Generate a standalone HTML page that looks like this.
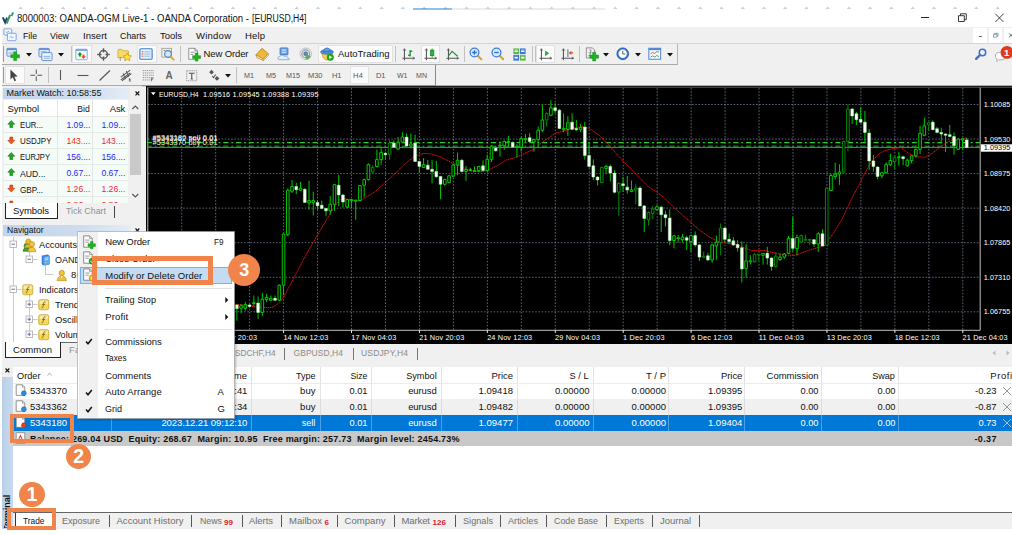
<!DOCTYPE html>
<html lang="en"><head><meta charset="utf-8"><title>MetaTrader 4 - Modify or Delete Order</title>
<style>
html,body{margin:0;padding:0;background:#fff;}
body{width:1012px;height:534px;position:relative;overflow:hidden;font-family:"Liberation Sans",sans-serif;}
.t{position:absolute;white-space:pre;}
.r{position:absolute;}
.i{position:absolute;overflow:visible;}
svg text{font-family:"Liberation Sans",sans-serif;}
</style></head>
<body>
<div class="r" style="left:2px;top:27px;width:1010px;height:60px;background:#f0f0f0;"></div>
<div class="r" style="left:2px;top:87px;width:144px;height:276px;background:#f0f0f0;"></div>
<svg class="i" style="left:0;top:0" width="1012" height="12"><path d="M18.4 8.900l2.200-2.400 2.200 2.400z" fill="#c6d0e0"/><path d="M39.6 8.900l2.200-2.400 2.200 2.400z" fill="#c6d0e0"/><path d="M60.9 8.900l2.200-2.400 2.200 2.400z" fill="#c6d0e0"/><path d="M82.1 8.900l2.200-2.400 2.200 2.400z" fill="#c6d0e0"/><path d="M103.4 8.900l2.200-2.400 2.200 2.400z" fill="#c6d0e0"/><path d="M124.6 8.900l2.200-2.400 2.200 2.400z" fill="#c6d0e0"/><path d="M145.8 8.900l2.200-2.400 2.200 2.400z" fill="#c6d0e0"/><path d="M167.1 8.900l2.200-2.400 2.200 2.400z" fill="#c6d0e0"/><path d="M188.3 8.900l2.200-2.400 2.200 2.400z" fill="#c6d0e0"/><path d="M209.6 8.900l2.200-2.400 2.200 2.400z" fill="#c6d0e0"/><path d="M230.8 8.900l2.200-2.400 2.200 2.400z" fill="#c6d0e0"/><path d="M252.0 8.900l2.200-2.400 2.200 2.400z" fill="#c6d0e0"/><path d="M273.3 8.900l2.200-2.400 2.200 2.400z" fill="#c6d0e0"/><path d="M294.5 8.900l2.200-2.400 2.200 2.400z" fill="#c6d0e0"/><path d="M315.8 8.900l2.200-2.400 2.200 2.400z" fill="#c6d0e0"/><path d="M337.0 8.900l2.200-2.400 2.200 2.400z" fill="#c6d0e0"/><path d="M358.2 8.900l2.200-2.400 2.200 2.400z" fill="#c6d0e0"/><path d="M379.5 8.900l2.200-2.400 2.200 2.400z" fill="#c6d0e0"/><path d="M400.7 8.900l2.200-2.400 2.200 2.400z" fill="#c6d0e0"/><path d="M422.0 8.900l2.200-2.400 2.200 2.400z" fill="#c6d0e0"/><path d="M443.2 8.900l2.200-2.400 2.200 2.400z" fill="#c6d0e0"/><path d="M464.4 8.900l2.200-2.400 2.200 2.400z" fill="#c6d0e0"/><path d="M485.7 8.900l2.200-2.400 2.200 2.400z" fill="#c6d0e0"/><path d="M506.9 8.900l2.200-2.400 2.200 2.400z" fill="#c6d0e0"/><path d="M528.2 8.900l2.200-2.400 2.200 2.400z" fill="#c6d0e0"/><path d="M549.4 8.900l2.200-2.400 2.200 2.400z" fill="#c6d0e0"/><path d="M570.6 8.900l2.200-2.400 2.200 2.400z" fill="#c6d0e0"/><path d="M591.9 8.900l2.200-2.400 2.200 2.400z" fill="#c6d0e0"/><path d="M613.1 8.900l2.200-2.400 2.200 2.400z" fill="#c6d0e0"/><path d="M634.4 8.900l2.200-2.400 2.200 2.400z" fill="#c6d0e0"/><path d="M655.6 8.900l2.200-2.400 2.200 2.400z" fill="#c6d0e0"/><path d="M676.8 8.900l2.200-2.400 2.200 2.400z" fill="#c6d0e0"/><path d="M698.1 8.900l2.200-2.400 2.200 2.400z" fill="#c6d0e0"/><path d="M719.3 8.900l2.200-2.400 2.200 2.400z" fill="#c6d0e0"/><path d="M740.6 8.900l2.200-2.400 2.200 2.400z" fill="#c6d0e0"/><path d="M761.8 8.900l2.200-2.400 2.200 2.400z" fill="#c6d0e0"/><path d="M783.0 8.900l2.200-2.400 2.200 2.400z" fill="#c6d0e0"/><path d="M804.3 8.900l2.200-2.400 2.200 2.400z" fill="#c6d0e0"/><path d="M825.5 8.900l2.200-2.400 2.200 2.400z" fill="#c6d0e0"/><path d="M846.8 8.900l2.200-2.400 2.200 2.400z" fill="#c6d0e0"/><path d="M868.0 8.900l2.200-2.400 2.200 2.400z" fill="#c6d0e0"/><path d="M889.2 8.900l2.200-2.400 2.200 2.400z" fill="#c6d0e0"/><path d="M910.5 8.900l2.200-2.400 2.200 2.400z" fill="#c6d0e0"/><path d="M931.7 8.900l2.200-2.400 2.200 2.400z" fill="#c6d0e0"/><path d="M953.0 8.900l2.200-2.400 2.200 2.400z" fill="#c6d0e0"/><path d="M974.2 8.900l2.200-2.400 2.200 2.400z" fill="#c6d0e0"/><path d="M995.4 8.900l2.200-2.400 2.200 2.400z" fill="#c6d0e0"/><path d="M1016.7 8.900l2.200-2.400 2.200 2.400z" fill="#c6d0e0"/><path d="M413 9h39" stroke="#2a80dc" stroke-width="1.100"/><path d="M452 9h153.500" stroke="#d6d6d6" stroke-width=".9"/></svg>
<svg class="i" style="left:2.3px;top:12.3px" width="12" height="12" viewBox="0 0 12 12"><path d="M0.800 5.300l2.300 5.200 1.900-4.800" stroke="#1f3a6e" stroke-width="1.900" fill="none"/><path d="M4.600 11.500l3.600-8.600" stroke="#2e9f62" stroke-width="2"/><path d="M9.600 4l1.500-3.600" stroke="#2e9f62" stroke-width="1.900"/></svg>
<span class="t" style="font-size:10px;line-height:12px;top:12.50px;color:#111;left:17.00px;transform:scaleX(0.9575);transform-origin:0 50%;">8000003: OANDA-OGM Live-1 - OANDA Corporation -</span>
<span class="t" style="font-size:10px;line-height:12px;top:12.50px;color:#111;left:252.00px;transform:scaleX(0.8604);transform-origin:0 50%;">[EURUSD,H4]</span>
<svg class="i" style="left:915px;top:8px" width="97" height="18"><path d="M6 9.500h8" stroke="#222" stroke-width="1"/><path d="M43.500 7.700h5.800v5.800h-5.800zM45.500 7.700v-1.900h5.800v5.800h-2" stroke="#222" stroke-width=".9" fill="none"/><path d="M80.300 5.800l8.200 8.200M88.500 5.800l-8.200 8.200" stroke="#222" stroke-width=".85"/></svg>
<svg class="i" style="left:3px;top:28px" width="14" height="14" viewBox="0 0 16 16"><rect x="1" y="1" width="9" height="7" rx="1" fill="#f5f9ff" stroke="#5b8fe0" stroke-width=".9"/><rect x="5" y="6" width="10" height="8.500" rx="1" fill="#f5f9ff" stroke="#5b8fe0" stroke-width=".9"/><path d="M3 4l1.500 1.500 1.500-2 1.500 1.500M7.500 11l1.500-1.500 1.500 2 1.500-1.500" stroke="#5b8fe0" stroke-width=".8" fill="none"/></svg>
<span class="t" style="font-size:9.5px;line-height:11.5px;top:29.75px;color:#111;left:22.50px;transform:scaleX(0.9146);transform-origin:0 50%;">File</span>
<span class="t" style="font-size:9.5px;line-height:11.5px;top:29.75px;color:#111;left:50.00px;transform:scaleX(0.9305);transform-origin:0 50%;">View</span>
<span class="t" style="font-size:9.5px;line-height:11.5px;top:29.75px;color:#111;letter-spacing:0.049px;left:83.00px;">Insert</span>
<span class="t" style="font-size:9.5px;line-height:11.5px;top:29.75px;color:#111;left:120.00px;transform:scaleX(0.9293);transform-origin:0 50%;">Charts</span>
<span class="t" style="font-size:9.5px;line-height:11.5px;top:29.75px;color:#111;letter-spacing:-0.044px;left:160.00px;">Tools</span>
<span class="t" style="font-size:9.5px;line-height:11.5px;top:29.75px;color:#111;letter-spacing:0.243px;left:196.00px;">Window</span>
<span class="t" style="font-size:9.5px;line-height:11.5px;top:29.75px;color:#111;letter-spacing:0.154px;left:245.00px;">Help</span>
<div class="r" style="left:973px;top:28px;width:14px;height:15px;background:#fff;"></div>
<div class="r" style="left:989px;top:28px;width:13px;height:15px;background:#fff;"></div>
<div class="r" style="left:1004px;top:28px;width:8px;height:15px;background:#fff;"></div>
<svg class="i" style="left:973px;top:28px" width="39" height="15"><path d="M5.800 8.500h3" stroke="#445078" stroke-width=".9"/><path d="M20.500 6.300h3.500v2.800h-3.500zM21.500 6.300v-1h3.500v2.800h-1" stroke="#7a86a6" stroke-width=".8" fill="none"/><path d="M36 5.300l4 4M40 5.300l-4 4" stroke="#50586e" stroke-width=".9"/></svg>
<div class="r" style="left:2px;top:43px;width:1010px;height:1px;background:#d4d4d4;"></div>
<div class="r" style="left:2px;top:64px;width:675px;height:1px;background:#a9a9a9;"></div>
<div class="r" style="left:677px;top:44px;width:1px;height:21px;background:#b5b5b5;"></div>
<div class="r" style="left:3px;top:46px;width:1px;height:16px;background:#9a9a9a;"></div>
<div class="r" style="left:72px;top:45px;width:20px;height:18px;background:#fbfbfb;box-shadow:inset 0 0 0 1px #e2e2e2;"></div>
<div class="r" style="left:137px;top:45px;width:20px;height:18px;background:#fbfbfb;box-shadow:inset 0 0 0 1px #e2e2e2;"></div>
<div class="r" style="left:318px;top:45px;width:75px;height:18px;background:#fbfbfb;box-shadow:inset 0 0 0 1px #e2e2e2;"></div>
<div class="r" style="left:421px;top:45px;width:19px;height:18px;background:#fbfbfb;box-shadow:inset 0 0 0 1px #e2e2e2;"></div>
<div class="r" style="left:536px;top:45px;width:19px;height:18px;background:#fbfbfb;box-shadow:inset 0 0 0 1px #e2e2e2;"></div>
<div class="r" style="left:71px;top:46px;width:1px;height:16px;background:#c2c2c2;"></div>
<div class="r" style="left:180px;top:46px;width:1px;height:16px;background:#c2c2c2;"></div>
<div class="r" style="left:395px;top:46px;width:1px;height:16px;background:#c2c2c2;"></div>
<div class="r" style="left:464px;top:46px;width:1px;height:16px;background:#c2c2c2;"></div>
<div class="r" style="left:532px;top:46px;width:1px;height:16px;background:#c2c2c2;"></div>
<div class="r" style="left:535px;top:46px;width:1px;height:16px;background:#c2c2c2;"></div>
<div class="r" style="left:579px;top:46px;width:1px;height:16px;background:#c2c2c2;"></div>
<svg class="i" style="left:6px;top:47px" width="14" height="14" viewBox="0 0 16 16"><rect x="1" y="1.5" width="11" height="9" rx="1" fill="#dbe9fb" stroke="#5a8fd6"/><rect x="1" y="1.5" width="11" height="2" fill="#5a8fd6"/><path d="M3 7h5" stroke="#7aa0d0" stroke-width="1"/><path d="M8.75 5.5h3.5v3.25h3.25v3.5h-3.25v3.25h-3.5v-3.25h-3.25v-3.5h3.25z" fill="#1db31d" stroke="#0c8a0c" stroke-width=".5"/></svg>
<svg class="i" style="left:38px;top:46.5px" width="15" height="15" viewBox="0 0 16 16"><rect x="1" y="1.5" width="11" height="9" rx="1" fill="#dbe9fb" stroke="#5a8fd6"/><rect x="1" y="1.5" width="11" height="1.6" fill="#5a8fd6"/><rect x="4" y="6" width="11" height="8.5" rx="1" fill="#e8f1fc" stroke="#5a8fd6"/><path d="M3 5h6M6 10h7M6 12h7" stroke="#7aa0d0" stroke-width=".8"/></svg>
<svg class="i" style="left:75px;top:47.5px" width="13" height="13" viewBox="0 0 16 16"><rect x="1" y="1.5" width="14" height="13" rx="1" fill="#f4f9ff" stroke="#6aa0e0"/><rect x="1" y="1.5" width="14" height="2" fill="#6aa0e0"/><path d="M6 5l3 3.2h-1.8v2.3h-2.4v-2.3h-1.8z" fill="#1a9a1a"/><path d="M10.5 13.5l-3-3.2h1.8v-2h2.4v2h1.8z" fill="#e8501c"/></svg>
<svg class="i" style="left:96.5px;top:47.5px" width="13" height="13" viewBox="0 0 16 16"><circle cx="8" cy="8" r="4.800" fill="none" stroke="#5a5a5a" stroke-width="1.800"/><path d="M8 0.300v5.200M8 10.500v5.200M0.300 8h5.200M10.500 8h5.200" stroke="#5a5a5a" stroke-width="1.700"/></svg>
<svg class="i" style="left:116.5px;top:46.5px" width="15" height="15" viewBox="0 0 16 16"><path d="M1 3.5q0-1 1-1h3l1.2 1.5h5.3q.8 0 .8 1v6.5h-11.3z" fill="#f7dc6a" stroke="#c9a227" stroke-width=".8"/><path d="M11 6.2l1.4 2.9 3.1.4-2.3 2.1.6 3.1-2.8-1.5-2.8 1.5.6-3.1-2.3-2.1 3.1-.4z" fill="#ffe24a" stroke="#c8950c" stroke-width=".8"/><path d="M3.5 11v3.5" stroke="#555" stroke-width="1" stroke-dasharray="1.2 1"/></svg>
<svg class="i" style="left:139px;top:47px" width="14" height="14" viewBox="0 0 16 16"><rect x="1" y="2" width="14" height="12" rx="1.2" fill="#eaf2fd" stroke="#3b7fd9" stroke-width="1.3"/><path d="M3 5.5h2M3 8h2M3 10.5h2" stroke="#d04020" stroke-width="1"/><path d="M6 5.5h7M6 8h7M6 10.5h7" stroke="#8fb2e0" stroke-width="1"/></svg>
<svg class="i" style="left:161px;top:47px" width="14" height="14" viewBox="0 0 16 16"><rect x="1" y="1.5" width="11" height="10" fill="#f1efe8" stroke="#9a958a" stroke-width=".9"/><path d="M3 4h2M6.5 4h2" stroke="#777" stroke-width="1"/><circle cx="8" cy="8" r="3.8" fill="#cfe3fa" fill-opacity=".8" stroke="#4a86d0" stroke-width="1.3"/><path d="M11 11l3.5 3.5" stroke="#d9a520" stroke-width="2" stroke-linecap="round"/></svg>
<svg class="i" style="left:186.5px;top:47px" width="14" height="14" viewBox="0 0 16 16"><path d="M2 1.5h7l3 3v9.5h-10z" fill="#fff" stroke="#777" stroke-width=".9"/><path d="M9 1.5v3h3" fill="none" stroke="#777" stroke-width=".9"/><path d="M4 6h5M4 8.5h3" stroke="#888" stroke-width="1"/><path d="M9.39 6.9h3.22v2.99h2.99v3.22h-2.99v2.99h-3.22v-2.99h-2.99v-3.22h2.99z" fill="#1db31d" stroke="#0c8a0c" stroke-width=".5"/></svg>
<svg class="i" style="left:255px;top:47px" width="14" height="14" viewBox="0 0 16 16"><path d="M1 9l7-7.5 7 6-6 7z" fill="#f0b83a" stroke="#b87a14" stroke-width=".9"/><path d="M1 9l1 3 7.5 3.5-.5-2z" fill="#fff3c8" stroke="#b87a14" stroke-width=".8"/><path d="M15 7.500l.2 2.2-5.700 5.800" fill="none" stroke="#b87a14" stroke-width=".8"/></svg>
<svg class="i" style="left:277px;top:47px" width="14" height="14" viewBox="0 0 16 16"><rect x="3.500" y="1" width="9" height="8" rx=".8" fill="#6aa5ea" stroke="#2d6cc0" stroke-width=".9"/><path d="M5.500 3.500h5M5.500 6h5" stroke="#e8f2ff" stroke-width="1.1"/><path d="M2.500 14.500q-2-.3-1.500-2.300.6-1.600 2.300-1.200.8-2 3-1.700 1.800.2 2.300 1.900 1.100-1.200 2.700-.5 1.400.7 1.100 2.200 1.900.1 1.600 1.600z" fill="#e6eefb" stroke="#7d9fd0" stroke-width=".9"/></svg>
<svg class="i" style="left:299px;top:47.25px" width="13.5" height="13.5" viewBox="0 0 16 16"><circle cx="8" cy="8" r="6.800" fill="#e9e9e9" stroke="#aaa" stroke-width=".8"/><circle cx="8" cy="8" r="4.600" fill="none" stroke="#8f9aa8" stroke-width="1.2"/><circle cx="8" cy="8" r="2.400" fill="#5d87c6" stroke="#4a6a9a" stroke-width=".7"/><path d="M8 8v7a7 7 0 0 0 6-4z" fill="#4fa64f" fill-opacity=".85"/></svg>
<svg class="i" style="left:320px;top:47px" width="14" height="14" viewBox="0 0 16 16"><path d="M2 6.500q1 8 6 8.500 5-.5 6-8.500z" fill="#f2d248" stroke="#c09a18" stroke-width=".8"/><ellipse cx="8" cy="5.600" rx="7.300" ry="2.700" fill="#4b8fe0" stroke="#2b62b0" stroke-width=".8"/><path d="M4 5q.5-4 4-4t4 4z" fill="#5f9fea" stroke="#2b62b0" stroke-width=".8"/><circle cx="11.800" cy="11.800" r="3.700" fill="#22b022" stroke="#0e800e" stroke-width=".6"/><path d="M10.600 9.800v4l3.300-2z" fill="#fff"/></svg>
<svg class="i" style="left:402px;top:47.5px" width="13" height="13" viewBox="0 0 16 16"><path d="M3 1v14M0.500 12.500h15" stroke="#555" stroke-width="1.300" fill="none"/><path d="M3 1l-1.500 2.200M3 1l1.500 2.200M15.500 12.500l-2.200-1.500M15.500 12.500l-2.200 1.500" stroke="#555" stroke-width="1"/><path d="M10 2.500v8M10 4h2.500M7.500 9h2.500" stroke="#1a9a3a" stroke-width="1.700"/></svg>
<svg class="i" style="left:424px;top:47.5px" width="13" height="13" viewBox="0 0 16 16"><path d="M3 1v14M0.500 12.500h15" stroke="#555" stroke-width="1.300" fill="none"/><path d="M3 1l-1.500 2.200M3 1l1.500 2.200M15.500 12.500l-2.200-1.500M15.500 12.500l-2.200 1.500" stroke="#555" stroke-width="1"/><path d="M10 0.500v11.500" stroke="#1a8a2a" stroke-width="1"/><rect x="7.800" y="2.500" width="4.400" height="7" fill="#2bb43b" stroke="#107a20" stroke-width=".7"/></svg>
<svg class="i" style="left:446px;top:47.5px" width="13" height="13" viewBox="0 0 16 16"><path d="M3 1v14M0.500 12.500h15" stroke="#555" stroke-width="1.300" fill="none"/><path d="M3 1l-1.500 2.200M3 1l1.500 2.200M15.500 12.500l-2.200-1.500M15.500 12.500l-2.200 1.500" stroke="#555" stroke-width="1"/><path d="M3.300 9.500l4.200-5.300 6.800 6" stroke="#1a9a3a" stroke-width="1.500" fill="none"/></svg>
<svg class="i" style="left:469px;top:47.25px" width="13.5" height="13.5" viewBox="0 0 16 16"><path d="M10 10l4.500 4.500" stroke="#d8a420" stroke-width="2.400" stroke-linecap="round"/><circle cx="6.500" cy="6.500" r="5.200" fill="#d9e9fc" stroke="#3f7fd6" stroke-width="1.500"/><path d="M3.800 6.500h5.400M6.500 3.800v5.400" stroke="#2f6fd0" stroke-width="1.600"/></svg>
<svg class="i" style="left:491px;top:47.25px" width="13.5" height="13.5" viewBox="0 0 16 16"><path d="M10 10l4.500 4.500" stroke="#d8a420" stroke-width="2.400" stroke-linecap="round"/><circle cx="6.500" cy="6.500" r="5.200" fill="#d9e9fc" stroke="#3f7fd6" stroke-width="1.500"/><path d="M3.800 6.500h5.400" stroke="#2f6fd0" stroke-width="1.600"/></svg>
<svg class="i" style="left:513px;top:47.5px" width="13" height="13" viewBox="0 0 16 16"><rect x="0.500" y="0.500" width="7" height="7" fill="#5fb548"/><rect x="8.500" y="0.500" width="7" height="7" fill="#3a78d8"/><rect x="0.500" y="8.500" width="7" height="7" fill="#3a78d8"/><rect x="8.500" y="8.500" width="7" height="7" fill="#5fb548"/><path d="M2 4h4M10 4h4M2 12h4M10 12h4" stroke="#fff" stroke-width="1.800"/><path d="M2 2h4M10 2h4M2 10h4M10 10h4" stroke="#fff" stroke-opacity=".5" stroke-width=".8"/></svg>
<svg class="i" style="left:539px;top:47.5px" width="13" height="13" viewBox="0 0 16 16"><path d="M3 1v14M0.500 12.500h15" stroke="#555" stroke-width="1.300" fill="none"/><path d="M3 1l-1.500 2.200M3 1l1.500 2.200M15.500 12.500l-2.200-1.500M15.500 12.500l-2.200 1.500" stroke="#555" stroke-width="1"/><path d="M7.500 3v7l5-3.500z" fill="#2aa83a"/></svg>
<svg class="i" style="left:561px;top:47.5px" width="13" height="13" viewBox="0 0 16 16"><path d="M3 1v14M0.500 12.500h15" stroke="#555" stroke-width="1.300" fill="none"/><path d="M3 1l-1.500 2.200M3 1l1.500 2.200M15.500 12.500l-2.200-1.500M15.500 12.500l-2.200 1.500" stroke="#555" stroke-width="1"/><path d="M8.500 1.500v9.500" stroke="#4a78b0" stroke-width="1.300"/><path d="M9.500 6l3.200-2.600v1.800h2.300v1.600h-2.300v1.800z" fill="#d8521c"/></svg>
<svg class="i" style="left:585px;top:47px" width="14" height="14" viewBox="0 0 16 16"><path d="M1.500 1h7l2.500 2.500v9h-9.500z" fill="#f2f2f2" stroke="#777" stroke-width=".9"/><path d="M5 4q1-2 2-.5l-1.500 6q-.8 1.500-1.800.5" stroke="#777" stroke-width=".9" fill="none"/><path d="M4 6.500h3.500" stroke="#777" stroke-width=".8"/><path d="M8.75 6h3.5v3.25h3.25v3.5h-3.25v3.25h-3.5v-3.25h-3.25v-3.5h3.25z" fill="#1db31d" stroke="#0c8a0c" stroke-width=".5"/></svg>
<svg class="i" style="left:616px;top:47.25px" width="13.5" height="13.5" viewBox="0 0 16 16"><circle cx="8" cy="8" r="7" fill="#2f74d8" stroke="#1b4f9e" stroke-width=".8"/><circle cx="8" cy="8" r="4.900" fill="#fff" stroke="#bcd" stroke-width=".5"/><path d="M8 4.500v3.800h3" stroke="#555" stroke-width="1.100" fill="none"/></svg>
<svg class="i" style="left:648px;top:47.25px" width="13.5" height="13.5" viewBox="0 0 16 16"><rect x="1" y="1.500" width="14" height="13" fill="#f4f8ff" stroke="#4a86d8" stroke-width="1.200"/><rect x="1" y="1.500" width="14" height="2.200" fill="#4a86d8"/><path d="M3 8l2.500-1.500 2.500 1 2.500-2 2.500.5" stroke="#d0481c" stroke-width="1" fill="none"/><path d="M3 12l2.500-1.500 2.500 1.500 2.500-2 2.500 1.500" stroke="#2a9a3a" stroke-width="1" fill="none"/></svg>
<svg class="i" style="left:26px;top:52.5px" width="6" height="4" viewBox="0 0 6 4"><path d="M0 0h6l-3 3.500z" fill="#111"/></svg>
<svg class="i" style="left:58px;top:52.5px" width="6" height="4" viewBox="0 0 6 4"><path d="M0 0h6l-3 3.500z" fill="#111"/></svg>
<svg class="i" style="left:603px;top:52.5px" width="6" height="4" viewBox="0 0 6 4"><path d="M0 0h6l-3 3.500z" fill="#111"/></svg>
<svg class="i" style="left:635px;top:52.5px" width="6" height="4" viewBox="0 0 6 4"><path d="M0 0h6l-3 3.500z" fill="#111"/></svg>
<svg class="i" style="left:667px;top:52.5px" width="6" height="4" viewBox="0 0 6 4"><path d="M0 0h6l-3 3.500z" fill="#111"/></svg>
<span class="t" style="font-size:9.5px;line-height:11.5px;top:48.25px;color:#111;letter-spacing:-0.116px;left:203.50px;">New Order</span>
<span class="t" style="font-size:9.5px;line-height:11.5px;top:48.25px;color:#111;letter-spacing:0.010px;left:338.00px;">AutoTrading</span>
<svg class="i" style="left:975px;top:47.5px" width="12" height="12" viewBox="0 0 16 16"><path d="M6.500 9.500l-5 5" stroke="#3c6fc8" stroke-width="3" stroke-linecap="round"/><circle cx="10" cy="6" r="4.300" fill="#eef4fd" stroke="#3c6fc8" stroke-width="2"/></svg>
<svg class="i" style="left:994px;top:49px" width="15" height="15" viewBox="0 0 16 16"><path d="M1.500 7.500q0-4 5.500-4t5.500 4-5.500 4q-1 0-1.800-.2l-2.200 2.200.2-2.800q-1.700-1.200-1.700-3.200z" fill="#fbfbfb" stroke="#a8a8a8" stroke-width="1"/></svg>
<svg class="i" style="left:999px;top:45px" width="13" height="15"><circle cx="8" cy="7.400" r="6.400" fill="#de3a20"/><text x="7.700" y="10.700" font-size="9.500" font-weight="bold" fill="#fff" text-anchor="middle">1</text></svg>
<div class="r" style="left:2px;top:85px;width:434px;height:1px;background:#a9a9a9;"></div>
<div class="r" style="left:435px;top:65px;width:1px;height:21px;background:#8a8a8a;"></div>
<div class="r" style="left:3px;top:67px;width:1px;height:16px;background:#9a9a9a;"></div>
<div class="r" style="left:5px;top:66px;width:20px;height:18px;background:#fbfbfb;box-shadow:inset 0 0 0 1px #e2e2e2;"></div>
<div class="r" style="left:350px;top:66px;width:19px;height:18px;background:#fbfbfb;box-shadow:inset 0 0 0 1px #e2e2e2;"></div>
<div class="r" style="left:48px;top:67px;width:1px;height:16px;background:#c2c2c2;"></div>
<div class="r" style="left:236px;top:67px;width:1px;height:16px;background:#c2c2c2;"></div>
<svg class="i" style="left:7.9px;top:69.1px" width="13" height="13" viewBox="0 0 16 16"><path d="M3 0.500v12.500l2.900-2.700 2 4.700 2-0.900-2-4.600 4-.2z" fill="#444"/></svg>
<svg class="i" style="left:29.5px;top:69px" width="12.5" height="12.5" viewBox="0 0 16 16"><path d="M8 0.500v6M8 9.500v6M0.500 8h6M9.500 8h6" stroke="#555" stroke-width="1.300"/></svg>
<svg class="i" style="left:55px;top:66px" width="60" height="18"><path d="M5.500 4v10" stroke="#555" stroke-width="1.100"/><path d="M22.500 9.500h11" stroke="#555" stroke-width="1.100"/><path d="M44.500 14.500l10.500-10" stroke="#555" stroke-width="1.100"/></svg>
<svg class="i" style="left:120px;top:69px" width="12.5" height="12.5" viewBox="0 0 16 16"><path d="M1 10.500l12-9M2.500 15l12-9M1 14l12-9" stroke="#555" stroke-width="1.300" /><path d="M4 5.500l3 7.500M8 2.500l3 7.500" stroke="#555" stroke-width="1.200"/><path d="M12 11.500v4h2.300M12 13.300h1.800" stroke="#444" stroke-width=".9" fill="none"/></svg>
<svg class="i" style="left:142px;top:69px" width="12.5" height="12.5" viewBox="0 0 16 16"><path d="M1 2h14M1 5h14M1 8h14M1 11h14" stroke="#777" stroke-width="1" stroke-dasharray="1.500 1"/><path d="M1 14h9" stroke="#777" stroke-width="1" stroke-dasharray="1.500 1"/><path d="M12 11.800v4M12 11.800h2.500M12 13.600h1.800" stroke="#444" stroke-width=".9" fill="none"/></svg>
<svg class="i" style="left:186px;top:69.5px" width="11.5" height="11.5" viewBox="0 0 16 16"><rect x="1" y="1" width="14" height="14" fill="none" stroke="#666" stroke-width="1" stroke-dasharray="1.400 1.200"/><path d="M4 4.500h8M8 4.500v8M6.500 12.500h3" stroke="#555" stroke-width="1.500" fill="none"/></svg>
<svg class="i" style="left:208px;top:69px" width="12.5" height="12.5" viewBox="0 0 16 16"><path d="M4.500 1l3 3-3 3-3-3z" fill="#555"/><path d="M11.500 9l3 3-3 3-3-3z" fill="#555"/><path d="M5.500 9l1.500 2 3-4" stroke="#555" stroke-width="1.400" fill="none"/></svg>
<span class="t" style="font-size:10px;line-height:12px;top:69.50px;color:#666;font-weight:bold;left:165.50px;">A</span>
<svg class="i" style="left:225px;top:73.5px" width="6" height="4" viewBox="0 0 6 4"><path d="M0 0h6l-3 3.500z" fill="#111"/></svg>
<span class="t" style="font-size:7.5px;line-height:9.5px;top:70.75px;color:#555;left:244.00px;transform:scaleX(0.9599);transform-origin:0 50%;">M1</span>
<span class="t" style="font-size:7.5px;line-height:9.5px;top:70.75px;color:#555;left:266.00px;transform:scaleX(0.9599);transform-origin:0 50%;">M5</span>
<span class="t" style="font-size:7.5px;line-height:9.5px;top:70.75px;color:#555;left:286.00px;transform:scaleX(0.9596);transform-origin:0 50%;">M15</span>
<span class="t" style="font-size:7.5px;line-height:9.5px;top:70.75px;color:#555;letter-spacing:-0.044px;left:308.00px;">M30</span>
<span class="t" style="font-size:7.5px;line-height:9.5px;top:70.75px;color:#555;letter-spacing:-0.087px;left:332.00px;">H1</span>
<span class="t" style="font-size:7.5px;line-height:9.5px;top:70.75px;color:#555;letter-spacing:0.413px;left:353.00px;">H4</span>
<span class="t" style="font-size:7.5px;line-height:9.5px;top:70.75px;color:#555;letter-spacing:-0.087px;left:376.00px;">D1</span>
<span class="t" style="font-size:7.5px;line-height:9.5px;top:70.75px;color:#555;left:397.00px;transform:scaleX(0.9333);transform-origin:0 50%;">W1</span>
<span class="t" style="font-size:7.5px;line-height:9.5px;top:70.75px;color:#555;left:416.00px;transform:scaleX(0.9431);transform-origin:0 50%;">MN</span>
<div class="r" style="left:3px;top:87.5px;width:127px;height:11.5px;background:;background:linear-gradient(90deg,#c3d5ea 0%,#cddcee 60%,#e4ecf6 100%);"></div>
<span class="t" style="font-size:9px;line-height:11px;top:87.70px;color:#111;letter-spacing:-0.010px;left:6.50px;">Market Watch: 10:58:55</span>
<svg class="i" style="left:134px;top:90px" width="7" height="7"><path d="M1.500 1.500l3.800 3.800M5.300 1.500l-3.800 3.800" stroke="#111" stroke-width="1.150"/></svg>
<div class="r" style="left:4px;top:100px;width:138px;height:103px;background:#fff;"></div>
<div class="r" style="left:4px;top:116.2px;width:124px;height:86.8px;background:#f5fcf8;"></div>
<span class="t" style="font-size:9.5px;line-height:11.5px;top:102.55px;color:#111;letter-spacing:-0.035px;left:7.50px;">Symbol</span>
<span class="t" style="font-size:9.5px;line-height:11.5px;top:102.55px;color:#111;left:75.77px;transform:scaleX(0.9104);transform-origin:100% 50%;">Bid</span>
<span class="t" style="font-size:9.5px;line-height:11.5px;top:102.55px;color:#111;letter-spacing:-0.168px;left:109.80px;">Ask</span>
<div class="r" style="left:4px;top:100px;width:124px;height:103px;overflow:hidden"><svg class="i" style="left:3.2px;top:19.95px" width="8.6" height="8.6" viewBox="0 0 16 16"><path d="M8 1l6.500 7h-3.800v6h-5.400v-6h-3.800z" fill="#28a428" stroke="#0d6e0d" stroke-width="1"/></svg><span class="t" style="font-size:9.5px;line-height:11.5px;top:19.20px;color:#111;left:15.80px;transform:scaleX(0.8221);transform-origin:0 50%;">EUR...</span><span class="t" style="font-size:9.5px;line-height:11.5px;top:18.80px;color:#2a2af0;left:59.59px;transform:scaleX(0.9089);transform-origin:100% 50%;">1.09...</span><span class="t" style="font-size:9.5px;line-height:11.5px;top:18.80px;color:#2a2af0;left:94.59px;transform:scaleX(0.9089);transform-origin:100% 50%;">1.09...</span><div class="r" style="left:0px;top:31.8px;width:124px;height:1px;background:#e4ebe7;"></div><svg class="i" style="left:3.2px;top:36.05px" width="8.6" height="8.6" viewBox="0 0 16 16"><path d="M8 15l6.500-7h-3.800v-6h-5.400v6h-3.800z" fill="#f0581c" stroke="#a83208" stroke-width="1"/></svg><span class="t" style="font-size:9.5px;line-height:11.5px;top:35.30px;color:#111;left:15.80px;transform:scaleX(0.8404);transform-origin:0 50%;">USDJPY</span><span class="t" style="font-size:9.5px;line-height:11.5px;top:34.90px;color:#f02a2a;left:59.59px;transform:scaleX(0.9089);transform-origin:100% 50%;">143....</span><span class="t" style="font-size:9.5px;line-height:11.5px;top:34.90px;color:#f02a2a;left:94.59px;transform:scaleX(0.9089);transform-origin:100% 50%;">143....</span><div class="r" style="left:0px;top:47.9px;width:124px;height:1px;background:#e4ebe7;"></div><svg class="i" style="left:3.2px;top:52.15px" width="8.6" height="8.6" viewBox="0 0 16 16"><path d="M8 1l6.500 7h-3.800v6h-5.400v-6h-3.800z" fill="#28a428" stroke="#0d6e0d" stroke-width="1"/></svg><span class="t" style="font-size:9.5px;line-height:11.5px;top:51.40px;color:#111;left:15.80px;transform:scaleX(0.8004);transform-origin:0 50%;">EURJPY</span><span class="t" style="font-size:9.5px;line-height:11.5px;top:51.00px;color:#2a2af0;left:59.59px;transform:scaleX(0.9089);transform-origin:100% 50%;">156....</span><span class="t" style="font-size:9.5px;line-height:11.5px;top:51.00px;color:#2a2af0;left:94.59px;transform:scaleX(0.9089);transform-origin:100% 50%;">156....</span><div class="r" style="left:0px;top:64px;width:124px;height:1px;background:#e4ebe7;"></div><svg class="i" style="left:3.2px;top:68.25px" width="8.6" height="8.6" viewBox="0 0 16 16"><path d="M8 1l6.500 7h-3.800v6h-5.400v-6h-3.800z" fill="#28a428" stroke="#0d6e0d" stroke-width="1"/></svg><span class="t" style="font-size:9.5px;line-height:11.5px;top:67.50px;color:#111;left:15.80px;transform:scaleX(0.9115);transform-origin:0 50%;">AUD...</span><span class="t" style="font-size:9.5px;line-height:11.5px;top:67.10px;color:#2a2af0;left:59.59px;transform:scaleX(0.9089);transform-origin:100% 50%;">0.67...</span><span class="t" style="font-size:9.5px;line-height:11.5px;top:67.10px;color:#2a2af0;left:94.59px;transform:scaleX(0.9089);transform-origin:100% 50%;">0.67...</span><div class="r" style="left:0px;top:80.1px;width:124px;height:1px;background:#e4ebe7;"></div><svg class="i" style="left:3.2px;top:84.35px" width="8.6" height="8.6" viewBox="0 0 16 16"><path d="M8 15l6.500-7h-3.800v-6h-5.400v6h-3.800z" fill="#f0581c" stroke="#a83208" stroke-width="1"/></svg><span class="t" style="font-size:9.5px;line-height:11.5px;top:83.60px;color:#111;left:15.80px;transform:scaleX(0.8596);transform-origin:0 50%;">GBP...</span><span class="t" style="font-size:9.5px;line-height:11.5px;top:83.20px;color:#f02a2a;left:59.59px;transform:scaleX(0.9089);transform-origin:100% 50%;">1.26...</span><span class="t" style="font-size:9.5px;line-height:11.5px;top:83.20px;color:#f02a2a;left:94.59px;transform:scaleX(0.9089);transform-origin:100% 50%;">1.26...</span><div class="r" style="left:0px;top:96.2px;width:124px;height:1px;background:#e4ebe7;"></div><svg class="i" style="left:3.2px;top:100.45px" width="8.6" height="8.6" viewBox="0 0 16 16"><path d="M8 15l6.500-7h-3.800v-6h-5.400v6h-3.800z" fill="#f0581c" stroke="#a83208" stroke-width="1"/></svg><span class="t" style="font-size:9.5px;line-height:11.5px;top:99.70px;color:#111;left:15.80px;transform:scaleX(0.8221);transform-origin:0 50%;">USD...</span><span class="t" style="font-size:9.5px;line-height:11.5px;top:99.30px;color:#f02a2a;left:59.59px;transform:scaleX(0.9089);transform-origin:100% 50%;">0.86...</span><span class="t" style="font-size:9.5px;line-height:11.5px;top:99.30px;color:#f02a2a;left:94.59px;transform:scaleX(0.9089);transform-origin:100% 50%;">0.86...</span><div class="r" style="left:0px;top:112.3px;width:124px;height:1px;background:#e4ebe7;"></div><div class="r" style="left:0px;top:16px;width:124px;height:1px;background:#e6e6e6;"></div></div>
<div class="r" style="left:57.3px;top:100px;width:1px;height:103px;background:#e2e6e4;"></div>
<div class="r" style="left:92.3px;top:100px;width:1px;height:103px;background:#e2e6e4;"></div>
<div class="r" style="left:128px;top:100px;width:14px;height:103px;background:#f0f0f0;"></div>
<div class="r" style="left:129.5px;top:114px;width:11.5px;height:61px;background:#c9c9c9;"></div>
<svg class="i" style="left:128px;top:100px" width="14" height="103"><path d="M4.300 9l3-3 3 3" stroke="#555" stroke-width="1.100" fill="none"/><path d="M4.300 94l3 3 3-3" stroke="#555" stroke-width="1.100" fill="none"/></svg>
<div class="r" style="left:5px;top:203px;width:52.5px;height:15.5px;background:#fff;border:1px solid #222;border-top:none;box-sizing:border-box;"></div>
<span class="t" style="font-size:9.5px;line-height:11.5px;top:205.25px;color:#111;letter-spacing:-0.071px;left:13.00px;">Symbols</span>
<span class="t" style="font-size:9.5px;line-height:11.5px;top:205.25px;color:#909090;left:66.00px;transform:scaleX(0.9318);transform-origin:0 50%;">Tick Chart</span>
<div class="r" style="left:114px;top:205.5px;width:1px;height:12px;background:#444;"></div>
<div class="r" style="left:3px;top:224.5px;width:127px;height:11.5px;background:;background:linear-gradient(90deg,#c3d5ea 0%,#cddcee 60%,#e4ecf6 100%);"></div>
<span class="t" style="font-size:9px;line-height:11px;top:224.50px;color:#111;left:6.50px;transform:scaleX(0.9477);transform-origin:0 50%;">Navigator</span>
<svg class="i" style="left:134px;top:226.500px" width="7" height="7"><path d="M1.500 1.500l3.800 3.800M5.300 1.500l-3.800 3.800" stroke="#111" stroke-width="1.150"/></svg>
<div class="r" style="left:4px;top:237px;width:138px;height:105px;background:#fff;"></div>
<svg class="i" style="left:0;top:237px" width="146" height="105"><path d="M13.500 0v105M29.500 11v11.500h8M45.500 26v11.500h8M13.500 52.500h8M29.500 56v41.500M29.500 67.500h8M29.500 82.500h8M29.500 97.500h8" stroke="#c4c4c4" stroke-width=".9" fill="none"/><rect x="10" y="4" width="6.500" height="6.500" fill="#fcfcfc" stroke="#b4b4b4" stroke-width=".9"/><path d="M11.5 7.25h3.500" stroke="#5a6a96" stroke-width=".9"/><rect x="26" y="19" width="6.500" height="6.500" fill="#fcfcfc" stroke="#b4b4b4" stroke-width=".9"/><path d="M27.5 22.25h3.500" stroke="#5a6a96" stroke-width=".9"/><rect x="10" y="49" width="6.500" height="6.500" fill="#fcfcfc" stroke="#b4b4b4" stroke-width=".9"/><path d="M11.5 52.25h3.500" stroke="#5a6a96" stroke-width=".9"/><rect x="26" y="64" width="6.500" height="6.500" fill="#fcfcfc" stroke="#b4b4b4" stroke-width=".9"/><path d="M27.5 67.25h3.500" stroke="#5a6a96" stroke-width=".9"/><path d="M29.25 65.5v3.500" stroke="#5a6a96" stroke-width=".9"/><rect x="26" y="79" width="6.500" height="6.500" fill="#fcfcfc" stroke="#b4b4b4" stroke-width=".9"/><path d="M27.5 82.25h3.500" stroke="#5a6a96" stroke-width=".9"/><path d="M29.25 80.5v3.500" stroke="#5a6a96" stroke-width=".9"/><rect x="26" y="94" width="6.500" height="6.500" fill="#fcfcfc" stroke="#b4b4b4" stroke-width=".9"/><path d="M27.5 97.25h3.500" stroke="#5a6a96" stroke-width=".9"/><path d="M29.25 95.5v3.500" stroke="#5a6a96" stroke-width=".9"/></svg>
<svg class="i" style="left:21.5px;top:237.8px" width="14.5" height="14.2" viewBox="0 0 16 16"><circle cx="5" cy="9" r="3" fill="#3aa83a" stroke="#1a6a1a" stroke-width=".6"/><path d="M1 15q0-4 4-4t4 4z" fill="#3aa83a" stroke="#1a6a1a" stroke-width=".6"/><circle cx="7" cy="4" r="3" fill="#e8b830" stroke="#a87a10" stroke-width=".6"/><path d="M2.500 11q.5-4 4.500-4t4.500 4z" fill="#e8b830" stroke="#a87a10" stroke-width=".6"/><circle cx="11" cy="7" r="3" fill="#f0c840" stroke="#a87a10" stroke-width=".6"/><path d="M6.500 15.500q.5-5 4.500-5t4.500 5z" fill="#f0c840" stroke="#a87a10" stroke-width=".6"/></svg>
<svg class="i" style="left:39.5px;top:252.5px" width="11" height="14" viewBox="0 0 16 16"><path d="M3 2l8-1.500 2.500 1.500v12l-8 1.500-2.500-1.500z" fill="#3d8be8" stroke="#1d5ab0" stroke-width=".8"/><path d="M5.500 3.500l8-1.500v12l-8 1.500z" fill="#5ea5f4"/><path d="M7 5.500l5-.9M7 8l5-.9" stroke="#e8f2ff" stroke-width="1.100"/><path d="M7 12l2.500-.5" stroke="#ffd84a" stroke-width="1.200"/></svg>
<svg class="i" style="left:55.5px;top:268.5px" width="11.5" height="12.5" viewBox="0 0 16 16"><circle cx="8" cy="5" r="3.800" fill="#eec03a" stroke="#a87a10" stroke-width=".7"/><path d="M1.500 15.500q.5-6.500 6.500-6.500t6.500 6.500z" fill="#eec03a" stroke="#a87a10" stroke-width=".7"/><path d="M6.500 9.500l1.500 3 1.500-3z" fill="#fff7d0"/></svg>
<svg class="i" style="left:22px;top:283.5px" width="11.5" height="11.5" viewBox="0 0 16 16"><rect x="1" y="1" width="14" height="14" rx="2.500" fill="#f6d85a" stroke="#b8901a" stroke-width=".9"/><rect x="2.200" y="2.200" width="11.600" height="5" rx="1.500" fill="#fff" fill-opacity=".45"/><path d="M10.500 4q-2-1-2.500 1.500l-1 5.500q-.5 2-2 1M5.500 7.500h4.500" stroke="#7a5a08" stroke-width="1.100" fill="none"/></svg>
<svg class="i" style="left:38px;top:298.5px" width="11.5" height="11.5" viewBox="0 0 16 16"><rect x="1" y="1" width="14" height="14" rx="2.500" fill="#f6d85a" stroke="#b8901a" stroke-width=".9"/><rect x="2.200" y="2.200" width="11.600" height="5" rx="1.500" fill="#fff" fill-opacity=".45"/><path d="M10.500 4q-2-1-2.500 1.500l-1 5.500q-.5 2-2 1M5.500 7.500h4.500" stroke="#7a5a08" stroke-width="1.100" fill="none"/></svg>
<svg class="i" style="left:38px;top:313.5px" width="11.5" height="11.5" viewBox="0 0 16 16"><rect x="1" y="1" width="14" height="14" rx="2.500" fill="#f6d85a" stroke="#b8901a" stroke-width=".9"/><rect x="2.200" y="2.200" width="11.600" height="5" rx="1.500" fill="#fff" fill-opacity=".45"/><path d="M10.500 4q-2-1-2.500 1.500l-1 5.500q-.5 2-2 1M5.500 7.500h4.500" stroke="#7a5a08" stroke-width="1.100" fill="none"/></svg>
<svg class="i" style="left:38px;top:328.5px" width="11.5" height="11.5" viewBox="0 0 16 16"><rect x="1" y="1" width="14" height="14" rx="2.500" fill="#f6d85a" stroke="#b8901a" stroke-width=".9"/><rect x="2.200" y="2.200" width="11.600" height="5" rx="1.500" fill="#fff" fill-opacity=".45"/><path d="M10.500 4q-2-1-2.500 1.500l-1 5.500q-.5 2-2 1M5.500 7.500h4.500" stroke="#7a5a08" stroke-width="1.100" fill="none"/></svg>
<span class="t" style="font-size:9.5px;line-height:11.5px;top:239.25px;color:#111;left:39.00px;transform:scaleX(0.9725);transform-origin:0 50%;">Accounts</span>
<span class="t" style="font-size:9.5px;line-height:11.5px;top:254.25px;color:#111;left:55.00px;transform:scaleX(0.9472);transform-origin:0 50%;">OANDA</span>
<span class="t" style="font-size:9.5px;line-height:11.5px;top:269.25px;color:#111;letter-spacing:0.503px;left:71.00px;">8000003</span>
<span class="t" style="font-size:9.5px;line-height:11.5px;top:284.25px;color:#111;left:39.00px;transform:scaleX(0.9591);transform-origin:0 50%;">Indicators</span>
<span class="t" style="font-size:9.5px;line-height:11.5px;top:299.25px;color:#111;letter-spacing:-0.116px;left:55.00px;">Trend</span>
<span class="t" style="font-size:9.5px;line-height:11.5px;top:314.25px;color:#111;letter-spacing:-0.034px;left:55.00px;">Oscillators</span>
<span class="t" style="font-size:9.5px;line-height:11.5px;top:329.25px;color:#111;left:55.00px;transform:scaleX(0.9606);transform-origin:0 50%;">Volumes</span>
<div class="r" style="left:60.5px;top:341.8px;width:81.5px;height:0.9px;background:#6a6a6a;"></div>
<div class="r" style="left:5px;top:342px;width:56px;height:15.5px;background:#fff;border:1px solid #222;border-top:none;box-sizing:border-box;"></div>
<span class="t" style="font-size:9.5px;line-height:11.5px;top:344.25px;color:#111;letter-spacing:0.093px;left:13.00px;">Common</span>
<span class="t" style="font-size:9.5px;line-height:11.5px;top:344.25px;color:#909090;letter-spacing:0.117px;left:69.00px;">Favorites</span>
<svg class="i" style="left:0;top:0" width="1012" height="534" viewBox="0 0 1012 534"><rect x="142" y="85.300" width="870" height="1" fill="#8c8c8c"/><rect x="146" y="86" width="866" height="258" fill="#000"/><path d="M181.72 88V330M215.68 88V330M249.64 88V330M283.60 88V330M317.56 88V330M351.52 88V330M385.48 88V330M419.44 88V330M453.40 88V330M487.36 88V330M521.32 88V330M555.28 88V330M589.24 88V330M623.20 88V330M657.16 88V330M691.12 88V330M725.08 88V330M759.04 88V330M793.00 88V330M826.96 88V330M860.92 88V330M894.88 88V330M928.84 88V330M962.80 88V330M148 104.50H980M148 139.05H980M148 173.60H980M148 208.15H980M148 242.70H980M148 277.25H980M148 311.80H980" stroke="#727f93" stroke-width=".8" stroke-dasharray="1.600 1.600" fill="none"/><path d="M147.800 87.500V330.300H980.200V87.500" stroke="#d6d6d6" stroke-width=".9" fill="none"/><path d="M147.300 87.200H1012" stroke="#9a9a9a" stroke-width=".6" fill="none"/><path d="M148 147.400H980" stroke="#788094" stroke-width=".95"/><path d="M146.750 142.600H980" stroke="#24cc24" stroke-width="1.350" stroke-dasharray="5.100 2.900 1.900 2.850"/><path d="M146.750 146.200H980" stroke="#1fa81f" stroke-width="1" stroke-dasharray="5.100 2.900 1.900 2.850"/><polyline points="234.0,304.0 250.0,306.0 258.0,307.5 272.0,307.5 278.0,304.0 283.7,297.0 308.7,250.0 331.2,211.8 338.7,200.6 343.4,198.3 350.0,199.6 355.5,200.6 361.0,200.2 366.8,196.8 375.0,191.8 385.3,182.4 393.7,174.9 403.0,165.5 412.4,158.0 419.5,154.3 425.5,153.4 431.2,153.9 438.7,156.2 446.1,159.6 453.6,163.7 460.0,165.5 466.9,169.6 474.3,171.5 482.8,171.5 487.5,170.5 496.8,165.8 506.2,160.2 516.5,157.0 524.9,153.3 534.3,149.0 541.8,142.5 555.6,133.1 566.8,130.3 576.2,127.5 581.8,126.5 589.3,128.4 598.7,134.9 609.9,146.2 623.0,161.0 631.8,169.4 640.3,178.7 648.7,187.2 656.2,191.5 663.7,197.5 674.9,208.3 688.0,219.9 699.4,230.0 708.7,236.5 718.0,241.6 727.5,243.4 736.8,244.6 744.3,247.8 751.8,250.6 765.0,250.6 776.0,253.4 786.0,255.2 795.3,255.2 798.0,254.3 807.5,250.6 816.8,247.8 824.3,245.9 828.0,240.3 833.7,232.8 841.2,220.6 846.8,209.4 853.4,195.0 860.0,183.0 865.6,171.8 871.2,162.4 878.7,154.0 884.3,150.8 893.7,148.4 901.1,147.6 905.6,151.2 911.2,154.9 916.9,156.8 924.3,157.2 930.0,154.9 937.5,149.3 945.0,143.7 950.6,140.9 956.2,140.0 961.8,139.0 967.0,137.7" fill="none" stroke="#e01010" stroke-width="1" stroke-dasharray="1.500 .500"/><path d="M236.87 303.97V320.82M241.11 303.97V305.84M241.11 308.28V313.33M245.36 302.10V304.53M245.36 308.28V310.52M249.60 303.97V307.72M253.85 295.54V302.66M253.85 303.56V306.78M258.09 296.48V318.95M262.33 292.73V299.29M262.33 312.40V316.14M266.58 293.67V297.42M266.58 299.66V302.10M270.82 295.54V298.35M270.82 300.22V301.16M275.06 295.54V300.79M279.31 284.31V285.24M279.31 300.22V300.79M283.55 233.75V234.12M283.55 285.24V295.54M287.79 188.39V190.26M287.79 234.64V236.14M292.04 179.96V186.52M292.04 191.20V193.07M296.28 182.77V194.01M300.52 181.84V188.39M300.52 190.26V190.82M304.77 188.39V203.00M309.01 180.90V200.56M309.01 202.81V209.93M313.25 191.57V200.56M313.25 202.43V215.54M317.50 200.56V209.93M321.74 200.56V208.99M325.99 208.05V216.48M330.23 195.88V204.31M330.23 210.86V214.61M334.47 184.08V184.64M334.47 204.31V210.86M338.72 174.91V206.18M342.96 194.01V207.68M347.20 199.06V199.63M347.20 207.12V208.05M351.45 199.06V199.63M351.45 200.56V208.43M355.69 199.63V200.19M355.69 201.09V219.66M359.93 185.21V185.58M359.93 200.56V200.94M364.18 178.65V179.59M364.18 185.21V197.38M368.42 163.30V164.61M368.42 179.59V180.52M376.91 149.63V159.55M376.91 166.48V167.42M381.15 147.75V152.43M381.15 159.55V164.61M385.39 151.50V159.93M393.88 140.26V147.75M398.12 137.08V142.13M398.12 149.06V149.63M402.37 132.21V137.08M402.37 142.13V142.70M406.61 133.33V146.82M410.86 133.71V144.01M410.86 145.88V148.31M415.10 134.64V161.80M419.34 160.86V173.03M423.59 158.05V164.61M423.59 167.42V167.79M427.83 159.93V169.66M432.07 159.93V183.33M436.32 160.86V177.72M440.56 175.84V199.25M444.80 178.65V179.59M444.80 184.27V185.77M449.05 174.91V175.84M449.05 182.40V183.33M453.29 163.97V164.91M453.29 176.14V177.08M457.53 152.73V160.22M457.53 164.91V175.21M461.78 159.29V172.40M466.02 165.84V169.59M466.02 171.46V180.82M470.26 167.72V169.59M470.26 170.49V170.90M474.51 166.40V170.52M474.51 171.42V172.02M478.75 165.84V166.40M478.75 170.52V172.40M482.99 160.22V171.46M487.24 154.61V159.29M487.24 170.52V171.46M491.48 145.24V146.18M491.48 159.29V162.10M495.73 146.18V151.42M499.97 141.50V145.24M499.97 146.14V156.48M504.21 140.56V141.50M504.21 145.81V149.93M508.46 135.88V141.50M508.46 142.43V148.05M512.70 141.50V148.05M516.94 144.31V146.18M516.94 147.12V157.42M521.19 136.82V138.69M521.19 147.12V151.80M525.43 134.01V138.69M525.43 139.63V142.43M529.67 133.07V142.43M533.92 138.69V139.63M533.92 142.06V151.80M538.16 126.52V130.26M538.16 139.63V146.18M542.40 104.61V119.96M542.40 130.26V132.13M550.89 100.30V107.79M550.89 115.28V116.22M555.13 103.11V113.41M559.38 108.73V128.95M563.62 113.41V128.39M563.62 129.70V132.13M567.86 116.22V122.77M567.86 129.33V135.88M572.11 113.41V130.26M576.35 119.96V130.82M580.60 123.71V127.45M580.60 129.33V132.13M584.84 121.84V159.66M589.08 142.43V167.72M593.33 159.29V179.89M597.57 176.14V185.51M606.06 164.68V166.55M606.06 168.43V174.04M610.30 164.68V181.54M614.54 170.30V193.33M623.03 176.85V191.84M627.27 175.92V193.71M631.52 180.60V189.96M631.52 191.46V192.21M640.00 186.22V206.44M644.25 204.94V232.10M656.98 204.94V206.82M656.98 209.63V210.56M661.22 205.88V232.10M665.47 210.56V226.48M669.71 209.63V245.21M673.95 234.91V235.84M673.95 240.52V248.39M678.20 234.91V237.72M678.20 238.65V242.40M682.44 233.97V237.15M682.44 239.59V242.40M686.68 235.84V249.89M690.93 234.64V235.58M690.93 241.57V252.06M695.17 231.46V246.82M699.41 244.01V260.86M707.90 252.81V260.86M712.14 244.01V244.94M712.14 259.93V262.73M716.39 235.58V242.13M716.39 245.88V259.93M724.87 227.15V242.13M729.12 233.71V244.01M733.36 237.08V245.88M737.60 240.26V251.50M741.85 241.20V282.40M746.09 244.01V260.86M746.09 268.35V277.72M750.34 255.24V260.86M750.34 261.80V264.61M763.07 253.00V253.37M763.07 255.24V264.61M767.31 246.82V264.61M771.55 257.12V270.79M780.04 253.37V257.12M780.04 259.55V260.86M784.28 253.00V253.93M784.28 257.12V258.99M788.53 235.96V238.39M788.53 253.37V254.31M792.77 216.85V251.50M797.01 234.64V237.45M797.01 248.69V255.24M813.99 238.95V246.82M818.23 232.21V233.71M818.23 244.01V252.06M822.47 229.03V246.44M830.96 173.65V175.52M830.96 190.51V190.88M835.21 162.79V174.03M835.21 176.46V179.27M839.45 164.29V172.15M839.45 174.03V184.89M852.18 108.11V124.03M856.42 111.85V124.96M860.67 107.17V123.09M864.91 110.92V142.75M869.15 129.08V169.91M873.40 154.93V171.78M877.64 166.16V179.27M881.88 171.78V172.72M881.88 175.90V178.33M886.13 162.42V164.66M886.13 172.72V173.65M890.37 153.99V160.54M890.37 164.66V166.16M898.86 152.12V156.80M898.86 157.73V165.79M903.10 155.86V165.22M907.34 158.67V160.17M907.34 165.79V166.54M911.59 154.93V155.86M911.59 160.54V163.35M915.83 148.37V149.31M915.83 155.86V157.73M920.07 125.90V133.39M920.07 149.31V153.99M924.32 117.85V125.90M924.32 135.26V136.20M932.81 120.28V130.21M937.05 126.84V133.39M941.29 127.77V143.31M945.54 133.39V152.12M949.78 124.96V137.13M954.02 132.45V154.55M958.27 138.45V139.01M958.27 149.31V150.24M962.51 138.45V139.01M962.51 139.94V149.31M966.75 137.70V148.37" stroke="#00c800" stroke-width="1" fill="none"/><path d="M372.66 165.54V167.42M372.66 172.10V173.97M389.64 139.70V143.07M389.64 154.31V159.93M546.65 112.47V113.41M546.65 119.96V126.52M601.81 166.55V167.49M601.81 182.47V182.85M618.79 182.47V183.41M618.79 192.21V216.18M635.76 184.34V188.09M635.76 189.96V204.01M648.49 211.50V212.43M648.49 219.93V225.54M652.73 205.88V209.06M652.73 213.37V218.99M703.66 251.50V256.18M703.66 257.12V257.68M720.63 223.41V228.09M720.63 242.70V255.24M754.58 253.37V254.31M754.58 261.80V262.73M758.82 253.93V254.31M758.82 255.21V260.86M775.80 252.43V256.18M775.80 266.48V267.42M801.26 234.64V235.58M801.26 242.13V243.07M805.50 234.64V239.33M805.50 240.23V240.26M809.74 238.95V239.33M809.74 240.23V244.94M826.72 187.70V188.26M826.72 245.19V245.75M843.69 140.88V141.44M843.69 172.15V172.72M847.94 104.36V109.04M847.94 141.44V151.18M894.61 154.93V157.73M894.61 161.48V169.91M928.56 122.15V122.72M928.56 124.96V130.58" stroke="#008a00" stroke-width="1" fill="none"/><path d="M239.81 305.84h2.600V308.28h-2.600zM244.06 304.53h2.600V308.28h-2.600zM252.55 302.66h2.600V303.56h-2.600zM261.03 299.29h2.600V312.40h-2.600zM265.28 297.42h2.600V299.66h-2.600zM269.52 298.35h2.600V300.22h-2.600zM278.01 285.24h2.600V300.22h-2.600zM282.25 234.12h2.600V285.24h-2.600zM286.49 190.26h2.600V234.64h-2.600zM290.74 186.52h2.600V191.20h-2.600zM299.22 188.39h2.600V190.26h-2.600zM307.71 200.56h2.600V202.81h-2.600zM311.95 200.56h2.600V202.43h-2.600zM328.93 204.31h2.600V210.86h-2.600zM333.17 184.64h2.600V204.31h-2.600zM345.90 199.63h2.600V207.12h-2.600zM350.15 199.63h2.600V200.56h-2.600zM354.39 200.19h2.600V201.09h-2.600zM358.63 185.58h2.600V200.56h-2.600zM362.88 179.59h2.600V185.21h-2.600zM367.12 164.61h2.600V179.59h-2.600zM375.61 159.55h2.600V166.48h-2.600zM379.85 152.43h2.600V159.55h-2.600zM396.82 142.13h2.600V149.06h-2.600zM401.07 137.08h2.600V142.13h-2.600zM409.56 144.01h2.600V145.88h-2.600zM422.29 164.61h2.600V167.42h-2.600zM443.50 179.59h2.600V184.27h-2.600zM447.75 175.84h2.600V182.40h-2.600zM451.99 164.91h2.600V176.14h-2.600zM456.23 160.22h2.600V164.91h-2.600zM464.72 169.59h2.600V171.46h-2.600zM468.96 169.59h2.600V170.49h-2.600zM473.21 170.52h2.600V171.42h-2.600zM477.45 166.40h2.600V170.52h-2.600zM485.94 159.29h2.600V170.52h-2.600zM490.18 146.18h2.600V159.29h-2.600zM498.67 145.24h2.600V146.14h-2.600zM502.91 141.50h2.600V145.81h-2.600zM507.16 141.50h2.600V142.43h-2.600zM515.64 146.18h2.600V147.12h-2.600zM519.89 138.69h2.600V147.12h-2.600zM524.13 138.69h2.600V139.63h-2.600zM532.62 139.63h2.600V142.06h-2.600zM536.86 130.26h2.600V139.63h-2.600zM541.10 119.96h2.600V130.26h-2.600zM549.59 107.79h2.600V115.28h-2.600zM562.32 128.39h2.600V129.70h-2.600zM566.56 122.77h2.600V129.33h-2.600zM579.30 127.45h2.600V129.33h-2.600zM604.76 166.55h2.600V168.43h-2.600zM630.22 189.96h2.600V191.46h-2.600zM655.68 206.82h2.600V209.63h-2.600zM672.65 235.84h2.600V240.52h-2.600zM676.90 237.72h2.600V238.65h-2.600zM681.14 237.15h2.600V239.59h-2.600zM689.63 235.58h2.600V241.57h-2.600zM710.84 244.94h2.600V259.93h-2.600zM715.09 242.13h2.600V245.88h-2.600zM744.79 260.86h2.600V268.35h-2.600zM749.04 260.86h2.600V261.80h-2.600zM761.77 253.37h2.600V255.24h-2.600zM778.74 257.12h2.600V259.55h-2.600zM782.98 253.93h2.600V257.12h-2.600zM787.23 238.39h2.600V253.37h-2.600zM795.71 237.45h2.600V248.69h-2.600zM816.93 233.71h2.600V244.01h-2.600zM829.66 175.52h2.600V190.51h-2.600zM833.91 174.03h2.600V176.46h-2.600zM838.15 172.15h2.600V174.03h-2.600zM880.58 172.72h2.600V175.90h-2.600zM884.83 164.66h2.600V172.72h-2.600zM889.07 160.54h2.600V164.66h-2.600zM897.56 156.80h2.600V157.73h-2.600zM906.04 160.17h2.600V165.79h-2.600zM910.29 155.86h2.600V160.54h-2.600zM914.53 149.31h2.600V155.86h-2.600zM918.77 133.39h2.600V149.31h-2.600zM923.02 125.90h2.600V135.26h-2.600zM956.97 139.01h2.600V149.31h-2.600zM961.21 139.01h2.600V139.94h-2.600z" stroke="#00e000" stroke-width=".9" fill="#000"/><path d="M371.36 167.42h2.600V172.10h-2.600zM388.34 143.07h2.600V154.31h-2.600zM545.35 113.41h2.600V119.96h-2.600zM600.51 167.49h2.600V182.47h-2.600zM617.49 183.41h2.600V192.21h-2.600zM634.46 188.09h2.600V189.96h-2.600zM647.19 212.43h2.600V219.93h-2.600zM651.43 209.06h2.600V213.37h-2.600zM702.36 256.18h2.600V257.12h-2.600zM719.33 228.09h2.600V242.70h-2.600zM753.28 254.31h2.600V261.80h-2.600zM757.52 254.31h2.600V255.21h-2.600zM774.50 256.18h2.600V266.48h-2.600zM799.96 235.58h2.600V242.13h-2.600zM804.20 239.33h2.600V240.23h-2.600zM808.44 239.33h2.600V240.23h-2.600zM825.42 188.26h2.600V245.19h-2.600zM842.39 141.44h2.600V172.15h-2.600zM846.64 109.04h2.600V141.44h-2.600zM893.31 157.73h2.600V161.48h-2.600zM927.26 122.72h2.600V124.96h-2.600z" stroke="#009800" stroke-width=".9" fill="#000"/><path d="M235.47 304.91h2.800V308.65h-2.800zM248.20 304.91h2.800V306.40h-2.800zM256.69 303.03h2.800V312.40h-2.800zM273.66 298.35h2.800V300.22h-2.800zM294.88 186.52h2.800V189.70h-2.800zM303.37 189.33h2.800V202.43h-2.800zM316.10 202.43h2.800V205.81h-2.800zM320.34 205.24h2.800V208.43h-2.800zM324.59 208.43h2.800V210.86h-2.800zM337.32 185.21h2.800V194.94h-2.800zM341.56 194.94h2.800V202.06h-2.800zM383.99 153.37h2.800V154.68h-2.800zM392.48 143.07h2.800V147.19h-2.800zM405.21 137.08h2.800V145.88h-2.800zM413.70 143.07h2.800V161.42h-2.800zM417.94 161.42h2.800V166.48h-2.800zM426.43 165.17h2.800V169.29h-2.800zM430.67 169.29h2.800V171.54h-2.800zM434.92 171.54h2.800V176.78h-2.800zM439.16 176.40h2.800V184.27h-2.800zM460.38 160.22h2.800V171.46h-2.800zM481.59 165.84h2.800V170.52h-2.800zM494.33 148.05h2.800V150.86h-2.800zM511.30 142.43h2.800V147.12h-2.800zM528.27 137.75h2.800V141.50h-2.800zM553.73 107.79h2.800V110.60h-2.800zM557.98 110.22h2.800V128.39h-2.800zM570.71 122.21h2.800V129.33h-2.800zM574.95 128.39h2.800V129.70h-2.800zM583.44 127.08h2.800V155.54h-2.800zM587.68 155.54h2.800V166.40h-2.800zM591.93 165.84h2.800V177.08h-2.800zM596.17 177.08h2.800V179.89h-2.800zM608.90 166.55h2.800V173.11h-2.800zM613.14 173.11h2.800V192.21h-2.800zM621.63 183.78h2.800V185.66h-2.800zM625.87 187.15h2.800V189.96h-2.800zM638.60 188.09h2.800V205.88h-2.800zM642.85 205.88h2.800V218.43h-2.800zM659.82 207.19h2.800V214.68h-2.800zM664.07 214.68h2.800V217.68h-2.800zM668.31 218.05h2.800V240.52h-2.800zM685.28 237.72h2.800V240.15h-2.800zM693.77 235.58h2.800V244.94h-2.800zM698.01 244.94h2.800V257.12h-2.800zM706.50 255.81h2.800V259.93h-2.800zM723.47 228.09h2.800V239.33h-2.800zM727.72 239.33h2.800V241.57h-2.800zM731.96 240.82h2.800V244.94h-2.800zM736.20 244.57h2.800V247.75h-2.800zM740.45 247.75h2.800V268.91h-2.800zM765.91 253.37h2.800V258.05h-2.800zM770.15 258.05h2.800V266.48h-2.800zM791.37 238.39h2.800V248.31h-2.800zM812.59 239.70h2.800V244.01h-2.800zM821.07 233.71h2.800V245.88h-2.800zM850.78 109.04h2.800V115.97h-2.800zM855.02 113.73h2.800V119.72h-2.800zM859.27 119.34h2.800V122.15h-2.800zM863.51 122.15h2.800V132.45h-2.800zM867.75 133.01h2.800V160.92h-2.800zM872.00 160.92h2.800V166.54h-2.800zM876.24 167.10h2.800V176.46h-2.800zM901.70 156.80h2.800V158.67h-2.800zM931.41 122.15h2.800V129.64h-2.800zM935.65 128.71h2.800V132.45h-2.800zM939.89 132.45h2.800V133.95h-2.800zM944.14 133.95h2.800V135.26h-2.800zM948.38 134.70h2.800V136.57h-2.800zM952.62 136.57h2.800V145.56h-2.800zM965.35 139.94h2.800V147.43h-2.800z" stroke="#9dffa0" stroke-width=".5" fill="#fff"/><rect x="981" y="144.300" width="31" height="7.400" fill="#fff"/><path d="M151 92.300h4.600l-2.300 3z" fill="#fff"/><path d="M215.68 330v3M283.60 330v3M351.52 330v3M419.44 330v3M487.36 330v3M555.28 330v3M623.20 330v3M691.12 330v3M759.04 330v3M826.96 330v3M894.88 330v3M962.80 330v3" stroke="#e8e8e8" stroke-width="1"/></svg>
<span class="t" style="font-size:7.3px;line-height:9.3px;top:89.55px;color:#fff;left:158.50px;transform:scaleX(0.9411);transform-origin:0 50%;">EURUSD,H4</span>
<span class="t" style="font-size:7.3px;line-height:9.3px;top:89.55px;color:#fff;letter-spacing:0.133px;left:203.00px;">1.09516 1.09545 1.09388 1.09395</span>
<span class="t" style="font-size:7.3px;line-height:9.3px;top:100.05px;color:#fff;letter-spacing:0.019px;left:983.80px;">1.10085</span>
<span class="t" style="font-size:7.3px;line-height:9.3px;top:134.60px;color:#fff;letter-spacing:0.019px;left:983.80px;">1.09530</span>
<span class="t" style="font-size:7.3px;line-height:9.3px;top:169.15px;color:#fff;letter-spacing:0.019px;left:983.80px;">1.08975</span>
<span class="t" style="font-size:7.3px;line-height:9.3px;top:203.70px;color:#fff;letter-spacing:0.019px;left:983.80px;">1.08420</span>
<span class="t" style="font-size:7.3px;line-height:9.3px;top:238.25px;color:#fff;letter-spacing:0.019px;left:983.80px;">1.07865</span>
<span class="t" style="font-size:7.3px;line-height:9.3px;top:272.80px;color:#fff;letter-spacing:0.019px;left:983.80px;">1.07310</span>
<span class="t" style="font-size:7.3px;line-height:9.3px;top:307.35px;color:#fff;letter-spacing:0.019px;left:983.80px;">1.06755</span>
<span class="t" style="font-size:7.3px;line-height:9.3px;top:143.45px;color:#000;letter-spacing:0.019px;left:983.80px;">1.09395</span>
<span class="t" style="font-size:7.3px;line-height:9.3px;top:332.85px;color:#fff;letter-spacing:0.214px;left:215.48px;">9 Nov 20:03</span>
<span class="t" style="font-size:7.3px;line-height:9.3px;top:332.85px;color:#fff;letter-spacing:0.143px;left:283.40px;">14 Nov 12:03</span>
<span class="t" style="font-size:7.3px;line-height:9.3px;top:332.85px;color:#fff;letter-spacing:0.143px;left:351.32px;">17 Nov 04:03</span>
<span class="t" style="font-size:7.3px;line-height:9.3px;top:332.85px;color:#fff;letter-spacing:0.143px;left:419.24px;">21 Nov 20:03</span>
<span class="t" style="font-size:7.3px;line-height:9.3px;top:332.85px;color:#fff;letter-spacing:0.143px;left:487.16px;">24 Nov 12:03</span>
<span class="t" style="font-size:7.3px;line-height:9.3px;top:332.85px;color:#fff;letter-spacing:0.143px;left:555.08px;">29 Nov 04:03</span>
<span class="t" style="font-size:7.3px;line-height:9.3px;top:332.85px;color:#fff;letter-spacing:0.214px;left:623.00px;">1 Dec 20:03</span>
<span class="t" style="font-size:7.3px;line-height:9.3px;top:332.85px;color:#fff;letter-spacing:0.214px;left:690.92px;">6 Dec 12:03</span>
<span class="t" style="font-size:7.3px;line-height:9.3px;top:332.85px;color:#fff;letter-spacing:0.193px;left:758.84px;">11 Dec 04:03</span>
<span class="t" style="font-size:7.3px;line-height:9.3px;top:332.85px;color:#fff;letter-spacing:0.143px;left:826.76px;">13 Dec 20:03</span>
<span class="t" style="font-size:7.3px;line-height:9.3px;top:332.85px;color:#fff;letter-spacing:0.143px;left:894.68px;">18 Dec 12:03</span>
<span class="t" style="font-size:7.3px;line-height:9.3px;top:332.85px;color:#fff;letter-spacing:0.143px;left:962.60px;">21 Dec 04:03</span>
<span class="t" style="font-size:7.3px;line-height:9.3px;top:133.35px;color:#ededed;letter-spacing:0.195px;left:152.50px;">#5343180 sell 0.01</span>
<span class="t" style="font-size:7.3px;line-height:9.3px;top:133.95px;color:#ededed;letter-spacing:0.156px;left:152.50px;">#5343362 buy 0.01</span>
<span class="t" style="font-size:7.3px;line-height:9.3px;top:137.65px;color:#ededed;letter-spacing:0.156px;left:152.50px;">#5343370 buy 0.01</span>
<div class="r" style="left:142px;top:344px;width:870px;height:19px;background:#f0f0f0;"></div>
<span class="t" style="font-size:8.5px;line-height:10.5px;top:348.25px;color:#8a8a8a;left:228.50px;transform:scaleX(0.9748);transform-origin:0 50%;">USDCHF,H4</span>
<span class="t" style="font-size:8.5px;line-height:10.5px;top:348.25px;color:#8a8a8a;letter-spacing:0.047px;left:293.50px;">GBPUSD,H4</span>
<span class="t" style="font-size:8.5px;line-height:10.5px;top:348.25px;color:#8a8a8a;letter-spacing:0.167px;left:361.00px;">USDJPY,H4</span>
<div class="r" style="left:284px;top:348px;width:1px;height:12px;background:#777;"></div>
<div class="r" style="left:352.5px;top:348px;width:1px;height:12px;background:#777;"></div>
<div class="r" style="left:416.5px;top:348px;width:1px;height:12px;background:#777;"></div>
<svg class="i" style="left:988px;top:348px" width="24" height="10"><path d="M7.500 2.500v5l-3-2.500z" fill="#bbb"/><path d="M18.500 2.500v5l3-2.500z" fill="#bbb"/></svg>
<div class="r" style="left:2px;top:363px;width:1010px;height:171px;background:#f0f0f0;"></div>
<div class="r" style="left:2px;top:377px;width:10.5px;height:152px;background:;background:linear-gradient(90deg,#b9cfe8,#c9daee);"></div>
<svg class="i" style="left:3.500px;top:367px" width="7" height="7"><path d="M1.500 1.500l3.800 3.800M5.300 1.500l-3.800 3.800" stroke="#111" stroke-width="1.150"/></svg>
<div class="r" style="left:12.5px;top:367px;width:1000px;height:145px;background:#fff;"></div>
<div class="r" style="left:12.5px;top:399.2px;width:1000px;height:15.6px;background:#f0f0f0;"></div>
<div class="r" style="left:12.5px;top:414.8px;width:1000px;height:16.2px;background:#0078d7;"></div>
<div class="r" style="left:12.5px;top:431px;width:1000px;height:15.3px;background:#c8c8c8;"></div>
<div class="r" style="left:12.5px;top:383.2px;width:1000px;height:0.8px;background:#ececec;"></div>
<div class="r" style="left:111.2px;top:367px;width:1px;height:16.2px;background:#e2e2e2;"></div>
<div class="r" style="left:111.2px;top:383.2px;width:1px;height:16px;background:#e6e6e6;"></div>
<div class="r" style="left:111.2px;top:399.2px;width:1px;height:15.6px;background:#dcdcdc;"></div>
<div class="r" style="left:111.2px;top:414.8px;width:1px;height:16.2px;background:#4d9fe3;"></div>
<div class="r" style="left:251px;top:367px;width:1px;height:16.2px;background:#e2e2e2;"></div>
<div class="r" style="left:251px;top:383.2px;width:1px;height:16px;background:#e6e6e6;"></div>
<div class="r" style="left:251px;top:399.2px;width:1px;height:15.6px;background:#dcdcdc;"></div>
<div class="r" style="left:251px;top:414.8px;width:1px;height:16.2px;background:#4d9fe3;"></div>
<div class="r" style="left:319.6px;top:367px;width:1px;height:16.2px;background:#e2e2e2;"></div>
<div class="r" style="left:319.6px;top:383.2px;width:1px;height:16px;background:#e6e6e6;"></div>
<div class="r" style="left:319.6px;top:399.2px;width:1px;height:15.6px;background:#dcdcdc;"></div>
<div class="r" style="left:319.6px;top:414.8px;width:1px;height:16.2px;background:#4d9fe3;"></div>
<div class="r" style="left:370.5px;top:367px;width:1px;height:16.2px;background:#e2e2e2;"></div>
<div class="r" style="left:370.5px;top:383.2px;width:1px;height:16px;background:#e6e6e6;"></div>
<div class="r" style="left:370.5px;top:399.2px;width:1px;height:15.6px;background:#dcdcdc;"></div>
<div class="r" style="left:370.5px;top:414.8px;width:1px;height:16.2px;background:#4d9fe3;"></div>
<div class="r" style="left:440.7px;top:367px;width:1px;height:16.2px;background:#e2e2e2;"></div>
<div class="r" style="left:440.7px;top:383.2px;width:1px;height:16px;background:#e6e6e6;"></div>
<div class="r" style="left:440.7px;top:399.2px;width:1px;height:15.6px;background:#dcdcdc;"></div>
<div class="r" style="left:440.7px;top:414.8px;width:1px;height:16.2px;background:#4d9fe3;"></div>
<div class="r" style="left:517px;top:367px;width:1px;height:16.2px;background:#e2e2e2;"></div>
<div class="r" style="left:517px;top:383.2px;width:1px;height:16px;background:#e6e6e6;"></div>
<div class="r" style="left:517px;top:399.2px;width:1px;height:15.6px;background:#dcdcdc;"></div>
<div class="r" style="left:517px;top:414.8px;width:1px;height:16.2px;background:#4d9fe3;"></div>
<div class="r" style="left:593px;top:367px;width:1px;height:16.2px;background:#e2e2e2;"></div>
<div class="r" style="left:593px;top:383.2px;width:1px;height:16px;background:#e6e6e6;"></div>
<div class="r" style="left:593px;top:399.2px;width:1px;height:15.6px;background:#dcdcdc;"></div>
<div class="r" style="left:593px;top:414.8px;width:1px;height:16.2px;background:#4d9fe3;"></div>
<div class="r" style="left:668px;top:367px;width:1px;height:16.2px;background:#e2e2e2;"></div>
<div class="r" style="left:668px;top:383.2px;width:1px;height:16px;background:#e6e6e6;"></div>
<div class="r" style="left:668px;top:399.2px;width:1px;height:15.6px;background:#dcdcdc;"></div>
<div class="r" style="left:668px;top:414.8px;width:1px;height:16.2px;background:#4d9fe3;"></div>
<div class="r" style="left:744.4px;top:367px;width:1px;height:16.2px;background:#e2e2e2;"></div>
<div class="r" style="left:744.4px;top:383.2px;width:1px;height:16px;background:#e6e6e6;"></div>
<div class="r" style="left:744.4px;top:399.2px;width:1px;height:15.6px;background:#dcdcdc;"></div>
<div class="r" style="left:744.4px;top:414.8px;width:1px;height:16.2px;background:#4d9fe3;"></div>
<div class="r" style="left:821.4px;top:367px;width:1px;height:16.2px;background:#e2e2e2;"></div>
<div class="r" style="left:821.4px;top:383.2px;width:1px;height:16px;background:#e6e6e6;"></div>
<div class="r" style="left:821.4px;top:399.2px;width:1px;height:15.6px;background:#dcdcdc;"></div>
<div class="r" style="left:821.4px;top:414.8px;width:1px;height:16.2px;background:#4d9fe3;"></div>
<div class="r" style="left:897.7px;top:367px;width:1px;height:16.2px;background:#e2e2e2;"></div>
<div class="r" style="left:897.7px;top:383.2px;width:1px;height:16px;background:#e6e6e6;"></div>
<div class="r" style="left:897.7px;top:399.2px;width:1px;height:15.6px;background:#dcdcdc;"></div>
<div class="r" style="left:897.7px;top:414.8px;width:1px;height:16.2px;background:#4d9fe3;"></div>
<span class="t" style="font-size:9.5px;line-height:11.5px;top:369.85px;color:#111;left:17.00px;transform:scaleX(0.9678);transform-origin:0 50%;">Order</span>
<svg class="i" style="left:47px;top:372px" width="5" height="5"><path d="M.5 3.500l2-2.500 2 2.500" stroke="#999" stroke-width=".8" fill="none"/></svg>
<span class="t" style="font-size:9.5px;line-height:11.5px;top:369.85px;color:#111;letter-spacing:0.081px;left:226.00px;">Time</span>
<span class="t" style="font-size:9.5px;line-height:11.5px;top:369.85px;color:#111;left:295.01px;transform:scaleX(0.9469);transform-origin:100% 50%;">Type</span>
<span class="t" style="font-size:9.5px;line-height:11.5px;top:369.85px;color:#111;left:349.22px;transform:scaleX(0.9199);transform-origin:100% 50%;">Size</span>
<span class="t" style="font-size:9.5px;line-height:11.5px;top:369.85px;color:#111;left:405.02px;transform:scaleX(0.9629);transform-origin:100% 50%;">Symbol</span>
<span class="t" style="font-size:9.5px;line-height:11.5px;top:369.85px;color:#111;letter-spacing:-0.036px;left:491.50px;">Price</span>
<span class="t" style="font-size:9.5px;line-height:11.5px;top:369.85px;color:#111;left:569.46px;transform:scaleX(0.9725);transform-origin:100% 50%;">S / L</span>
<span class="t" style="font-size:9.5px;line-height:11.5px;top:369.85px;color:#111;letter-spacing:0.029px;left:646.00px;">T / P</span>
<span class="t" style="font-size:9.5px;line-height:11.5px;top:369.85px;color:#111;letter-spacing:-0.036px;left:720.90px;">Price</span>
<span class="t" style="font-size:9.5px;line-height:11.5px;top:369.85px;color:#111;letter-spacing:-0.029px;left:766.60px;">Commission</span>
<span class="t" style="font-size:9.5px;line-height:11.5px;top:369.85px;color:#111;left:871.24px;transform:scaleX(0.9468);transform-origin:100% 50%;">Swap</span>
<span class="t" style="font-size:9.5px;line-height:11.5px;top:369.85px;color:#111;letter-spacing:0.566px;left:990.30px;">Profit</span>
<svg class="i" style="left:15px;top:384.1px" width="12.5" height="12.5" viewBox="0 0 16 16"><path d="M1.500 1h8l3 3v10.500h-11z" fill="#fff" stroke="#777" stroke-width="1"/><path d="M9.500 1v3h3" fill="#e8e8e8" stroke="#777" stroke-width=".8"/><circle cx="11.300" cy="11.800" r="3.100" fill="#2a8ae8" stroke="#1a5aa8" stroke-width=".7"/></svg>
<span class="t" style="font-size:9.5px;line-height:11.5px;top:385.05px;color:#111;letter-spacing:0.003px;left:30.00px;">5343370</span>
<span class="t" style="font-size:9.5px;line-height:11.5px;top:385.05px;color:#111;letter-spacing:-0.064px;left:161.40px;">2023.12.21 10:58:41</span>
<span class="t" style="font-size:9.5px;line-height:11.5px;top:385.05px;color:#111;letter-spacing:0.092px;left:300.10px;">buy</span>
<span class="t" style="font-size:9.5px;line-height:11.5px;top:385.05px;color:#111;left:348.81px;transform:scaleX(0.9736);transform-origin:100% 50%;">0.01</span>
<span class="t" style="font-size:9.5px;line-height:11.5px;top:385.05px;color:#111;letter-spacing:-0.109px;left:408.20px;">eurusd</span>
<span class="t" style="font-size:9.5px;line-height:11.5px;top:385.05px;color:#111;letter-spacing:0.027px;left:478.50px;">1.09418</span>
<span class="t" style="font-size:9.5px;line-height:11.5px;top:385.05px;color:#111;letter-spacing:0.027px;left:555.00px;">0.00000</span>
<span class="t" style="font-size:9.5px;line-height:11.5px;top:385.05px;color:#111;letter-spacing:0.027px;left:631.50px;">0.00000</span>
<span class="t" style="font-size:9.5px;line-height:11.5px;top:385.05px;color:#111;letter-spacing:0.027px;left:707.90px;">1.09395</span>
<span class="t" style="font-size:9.5px;line-height:11.5px;top:385.05px;color:#111;left:800.11px;transform:scaleX(0.9736);transform-origin:100% 50%;">0.00</span>
<span class="t" style="font-size:9.5px;line-height:11.5px;top:385.05px;color:#111;left:876.51px;transform:scaleX(0.9736);transform-origin:100% 50%;">0.00</span>
<span class="t" style="font-size:9.5px;line-height:11.5px;top:385.05px;color:#111;letter-spacing:-0.038px;left:975.00px;">-0.23</span>
<svg class="i" style="left:1002px;top:385.6px" width="10" height="10"><path d="M1 1l8 8M9 1l-8 8" stroke="#8a8a8a" stroke-width=".9"/></svg>
<svg class="i" style="left:15px;top:400px" width="12.5" height="12.5" viewBox="0 0 16 16"><path d="M1.500 1h8l3 3v10.500h-11z" fill="#fff" stroke="#777" stroke-width="1"/><path d="M9.500 1v3h3" fill="#e8e8e8" stroke="#777" stroke-width=".8"/><circle cx="11.300" cy="11.800" r="3.100" fill="#2a8ae8" stroke="#1a5aa8" stroke-width=".7"/></svg>
<span class="t" style="font-size:9.5px;line-height:11.5px;top:400.95px;color:#111;letter-spacing:0.003px;left:30.00px;">5343362</span>
<span class="t" style="font-size:9.5px;line-height:11.5px;top:400.95px;color:#111;letter-spacing:-0.064px;left:161.40px;">2023.12.21 10:58:34</span>
<span class="t" style="font-size:9.5px;line-height:11.5px;top:400.95px;color:#111;letter-spacing:0.092px;left:300.10px;">buy</span>
<span class="t" style="font-size:9.5px;line-height:11.5px;top:400.95px;color:#111;left:348.81px;transform:scaleX(0.9736);transform-origin:100% 50%;">0.01</span>
<span class="t" style="font-size:9.5px;line-height:11.5px;top:400.95px;color:#111;letter-spacing:-0.109px;left:408.20px;">eurusd</span>
<span class="t" style="font-size:9.5px;line-height:11.5px;top:400.95px;color:#111;letter-spacing:0.027px;left:478.50px;">1.09482</span>
<span class="t" style="font-size:9.5px;line-height:11.5px;top:400.95px;color:#111;letter-spacing:0.027px;left:555.00px;">0.00000</span>
<span class="t" style="font-size:9.5px;line-height:11.5px;top:400.95px;color:#111;letter-spacing:0.027px;left:631.50px;">0.00000</span>
<span class="t" style="font-size:9.5px;line-height:11.5px;top:400.95px;color:#111;letter-spacing:0.027px;left:707.90px;">1.09395</span>
<span class="t" style="font-size:9.5px;line-height:11.5px;top:400.95px;color:#111;left:800.11px;transform:scaleX(0.9736);transform-origin:100% 50%;">0.00</span>
<span class="t" style="font-size:9.5px;line-height:11.5px;top:400.95px;color:#111;left:876.51px;transform:scaleX(0.9736);transform-origin:100% 50%;">0.00</span>
<span class="t" style="font-size:9.5px;line-height:11.5px;top:400.95px;color:#111;letter-spacing:-0.038px;left:975.00px;">-0.87</span>
<svg class="i" style="left:1002px;top:401.5px" width="10" height="10"><path d="M1 1l8 8M9 1l-8 8" stroke="#8a8a8a" stroke-width=".9"/></svg>
<svg class="i" style="left:15px;top:416.4px" width="12.5" height="12.5" viewBox="0 0 16 16"><path d="M1.500 1h8l3 3v10.500h-11z" fill="#fff" stroke="#777" stroke-width="1"/><path d="M9.500 1v3h3" fill="#e8e8e8" stroke="#777" stroke-width=".8"/><circle cx="11.300" cy="11.800" r="3.100" fill="#e8401c" stroke="#a82a0c" stroke-width=".7"/></svg>
<span class="t" style="font-size:9.5px;line-height:11.5px;top:417.35px;color:#fff;letter-spacing:0.003px;left:30.00px;">5343180</span>
<span class="t" style="font-size:9.5px;line-height:11.5px;top:417.35px;color:#fff;letter-spacing:-0.064px;left:161.40px;">2023.12.21 09:12:10</span>
<span class="t" style="font-size:9.5px;line-height:11.5px;top:417.35px;color:#fff;left:301.35px;transform:scaleX(0.9471);transform-origin:100% 50%;">sell</span>
<span class="t" style="font-size:9.5px;line-height:11.5px;top:417.35px;color:#fff;left:348.81px;transform:scaleX(0.9736);transform-origin:100% 50%;">0.01</span>
<span class="t" style="font-size:9.5px;line-height:11.5px;top:417.35px;color:#fff;letter-spacing:-0.109px;left:408.20px;">eurusd</span>
<span class="t" style="font-size:9.5px;line-height:11.5px;top:417.35px;color:#fff;letter-spacing:0.027px;left:478.50px;">1.09477</span>
<span class="t" style="font-size:9.5px;line-height:11.5px;top:417.35px;color:#fff;letter-spacing:0.027px;left:555.00px;">0.00000</span>
<span class="t" style="font-size:9.5px;line-height:11.5px;top:417.35px;color:#fff;letter-spacing:0.027px;left:631.50px;">0.00000</span>
<span class="t" style="font-size:9.5px;line-height:11.5px;top:417.35px;color:#fff;letter-spacing:0.027px;left:707.90px;">1.09404</span>
<span class="t" style="font-size:9.5px;line-height:11.5px;top:417.35px;color:#fff;left:800.11px;transform:scaleX(0.9736);transform-origin:100% 50%;">0.00</span>
<span class="t" style="font-size:9.5px;line-height:11.5px;top:417.35px;color:#fff;left:876.51px;transform:scaleX(0.9736);transform-origin:100% 50%;">0.00</span>
<span class="t" style="font-size:9.5px;line-height:11.5px;top:417.35px;color:#fff;left:978.01px;transform:scaleX(0.9736);transform-origin:100% 50%;">0.73</span>
<svg class="i" style="left:1002px;top:417.9px" width="10" height="10"><path d="M1 1l8 8M9 1l-8 8" stroke="#c4c8cc" stroke-width=".9"/></svg>
<svg class="i" style="left:15px;top:432px" width="12.5" height="12.5" viewBox="0 0 16 16"><rect x="1.500" y="1" width="11" height="13.500" fill="#fff" stroke="#888" stroke-width="1"/><path d="M4 11.500l3-7 3 7M5 9.500h4" stroke="#d8401c" stroke-width="1.300" fill="none"/></svg>
<span class="t" style="font-size:9px;line-height:11px;top:433.90px;color:#111;font-weight:bold;letter-spacing:0.211px;left:30.00px;">Balance: 269.04 USD  Equity: 268.67  Margin: 10.95  Free margin: 257.73  Margin level: 2454.73%</span>
<span class="t" style="font-size:9px;line-height:11px;top:433.90px;color:#111;font-weight:bold;letter-spacing:0.372px;left:974.50px;">-0.37</span>
<div class="r" style="left:12.5px;top:512px;width:1000px;height:0.9px;background:#666;"></div>
<div class="r" style="left:12.5px;top:512.9px;width:1000px;height:16px;background:#f0f0f0;"></div>
<div class="r" style="left:2px;top:529px;width:1010px;height:5px;background:#fff;"></div>
<div class="r" style="left:15px;top:512.5px;width:38.5px;height:15.5px;background:#fff;border:1px solid #333;border-top:none;box-sizing:border-box;"></div>
<span class="t" style="font-size:9.5px;line-height:11.5px;top:515.25px;color:#111;left:23.00px;transform:scaleX(0.8789);transform-origin:0 50%;">Trade</span>
<span class="t" style="font-size:9.5px;line-height:11.5px;top:515.25px;color:#6e6e6e;left:62.00px;transform:scaleX(0.9469);transform-origin:0 50%;">Exposure</span>
<span class="t" style="font-size:9.5px;line-height:11.5px;top:515.25px;color:#6e6e6e;letter-spacing:0.034px;left:116.50px;">Account History</span>
<span class="t" style="font-size:9.5px;line-height:11.5px;top:515.25px;color:#6e6e6e;left:199.50px;transform:scaleX(0.9261);transform-origin:0 50%;">News</span>
<span class="t" style="font-size:9.5px;line-height:11.5px;top:515.25px;color:#6e6e6e;letter-spacing:-0.057px;left:249.00px;">Alerts</span>
<span class="t" style="font-size:9.5px;line-height:11.5px;top:515.25px;color:#6e6e6e;letter-spacing:0.044px;left:289.00px;">Mailbox</span>
<span class="t" style="font-size:9.5px;line-height:11.5px;top:515.25px;color:#6e6e6e;letter-spacing:0.057px;left:344.50px;">Company</span>
<span class="t" style="font-size:9.5px;line-height:11.5px;top:515.25px;color:#6e6e6e;letter-spacing:-0.106px;left:401.50px;">Market</span>
<span class="t" style="font-size:9.5px;line-height:11.5px;top:515.25px;color:#6e6e6e;left:462.50px;transform:scaleX(0.9629);transform-origin:0 50%;">Signals</span>
<span class="t" style="font-size:9.5px;line-height:11.5px;top:515.25px;color:#6e6e6e;left:508.00px;transform:scaleX(0.9633);transform-origin:0 50%;">Articles</span>
<span class="t" style="font-size:9.5px;line-height:11.5px;top:515.25px;color:#6e6e6e;left:554.00px;transform:scaleX(0.9361);transform-origin:0 50%;">Code Base</span>
<span class="t" style="font-size:9.5px;line-height:11.5px;top:515.25px;color:#6e6e6e;left:614.00px;transform:scaleX(0.9315);transform-origin:0 50%;">Experts</span>
<span class="t" style="font-size:9.5px;line-height:11.5px;top:515.25px;color:#6e6e6e;letter-spacing:-0.026px;left:660.00px;">Journal</span>
<span class="t" style="font-size:8px;line-height:10px;top:518.00px;color:#e0202a;font-weight:bold;left:224.00px;">99</span>
<span class="t" style="font-size:8px;line-height:10px;top:518.00px;color:#e0202a;font-weight:bold;left:324.50px;">6</span>
<span class="t" style="font-size:8px;line-height:10px;top:518.00px;color:#e0202a;font-weight:bold;left:432.50px;">126</span>
<div class="r" style="left:108.5px;top:515px;width:1px;height:12px;background:#555;"></div>
<div class="r" style="left:191px;top:515px;width:1px;height:12px;background:#555;"></div>
<div class="r" style="left:241.5px;top:515px;width:1px;height:12px;background:#555;"></div>
<div class="r" style="left:281px;top:515px;width:1px;height:12px;background:#555;"></div>
<div class="r" style="left:337px;top:515px;width:1px;height:12px;background:#555;"></div>
<div class="r" style="left:393.5px;top:515px;width:1px;height:12px;background:#555;"></div>
<div class="r" style="left:454.5px;top:515px;width:1px;height:12px;background:#555;"></div>
<div class="r" style="left:500px;top:515px;width:1px;height:12px;background:#555;"></div>
<div class="r" style="left:546px;top:515px;width:1px;height:12px;background:#555;"></div>
<div class="r" style="left:606px;top:515px;width:1px;height:12px;background:#555;"></div>
<div class="r" style="left:652px;top:515px;width:1px;height:12px;background:#555;"></div>
<div class="r" style="left:699px;top:515px;width:1px;height:12px;background:#555;"></div>
<div class="r" style="left:0;top:480px;width:12px;height:48px;overflow:hidden"><span class="t" style="left:1.600px;top:50.500px;font-size:9px;font-weight:bold;color:#111;line-height:11px;transform-origin:0 0;transform:rotate(-90deg);letter-spacing:-.1px">Terminal</span></div>
<div class="r" style="left:78px;top:231.5px;width:155.5px;height:186.5px;background:#fff;box-shadow:0 0 0 .8px #b4b4b4, 1.500px 1.500px 2px rgba(0,0,0,.25);"></div>
<div class="r" style="left:78.5px;top:232px;width:19.4px;height:185.5px;background:#f0f0f0;"></div>
<div class="r" style="left:79.5px;top:266.5px;width:152.2px;height:17px;background:#c4dcf2;box-shadow:inset 0 0 0 1px #7fb0e6;"></div>
<div class="r" style="left:105px;top:287.5px;width:127px;height:1px;background:#e2e2e2;"></div>
<div class="r" style="left:105px;top:328.5px;width:127px;height:1px;background:#e2e2e2;"></div>
<span class="t" style="font-size:9.5px;line-height:11.5px;top:235.75px;color:#111;letter-spacing:-0.116px;left:105.20px;">New Order</span>
<span class="t" style="font-size:9.5px;line-height:11.5px;top:252.75px;color:#111;letter-spacing:-0.071px;left:105.20px;">Close Order</span>
<span class="t" style="font-size:9.5px;line-height:11.5px;top:269.75px;color:#111;letter-spacing:0.044px;left:105.20px;">Modify or Delete Order</span>
<span class="t" style="font-size:9.5px;line-height:11.5px;top:294.05px;color:#111;left:105.20px;transform:scaleX(0.9627);transform-origin:0 50%;">Trailing Stop</span>
<span class="t" style="font-size:9.5px;line-height:11.5px;top:310.75px;color:#111;letter-spacing:0.166px;left:105.20px;">Profit</span>
<span class="t" style="font-size:9.5px;line-height:11.5px;top:335.55px;color:#111;letter-spacing:-0.051px;left:105.20px;">Commissions</span>
<span class="t" style="font-size:9.5px;line-height:11.5px;top:352.25px;color:#111;left:105.20px;transform:scaleX(0.8664);transform-origin:0 50%;">Taxes</span>
<span class="t" style="font-size:9.5px;line-height:11.5px;top:369.55px;color:#111;letter-spacing:0.011px;left:105.20px;">Comments</span>
<span class="t" style="font-size:9.5px;line-height:11.5px;top:386.25px;color:#111;letter-spacing:0.095px;left:105.20px;">Auto Arrange</span>
<span class="t" style="font-size:9.5px;line-height:11.5px;top:403.25px;color:#111;left:105.20px;transform:scaleX(0.9473);transform-origin:0 50%;">Grid</span>
<span class="t" style="font-size:9.5px;line-height:11.5px;top:235.75px;color:#111;left:213.70px;transform:scaleX(0.8570);transform-origin:0 50%;">F9</span>
<span class="t" style="font-size:9.5px;line-height:11.5px;top:386.25px;color:#111;left:217.50px;">A</span>
<span class="t" style="font-size:9.5px;line-height:11.5px;top:403.25px;color:#111;left:217.50px;">G</span>
<svg class="i" style="left:224.500px;top:296.8px" width="4" height="6"><path d="M.3 0v6l3-3z" fill="#111"/></svg>
<svg class="i" style="left:224.500px;top:313.5px" width="4" height="6"><path d="M.3 0v6l3-3z" fill="#111"/></svg>
<svg class="i" style="left:84.500px;top:337.8px" width="8" height="7"><path d="M1 3.500l2 2.300 3.800-4.800" stroke="#111" stroke-width="1.500" fill="none"/></svg>
<svg class="i" style="left:84.500px;top:388.5px" width="8" height="7"><path d="M1 3.500l2 2.300 3.800-4.800" stroke="#111" stroke-width="1.500" fill="none"/></svg>
<svg class="i" style="left:84.500px;top:405.5px" width="8" height="7"><path d="M1 3.500l2 2.300 3.800-4.800" stroke="#111" stroke-width="1.500" fill="none"/></svg>
<svg class="i" style="left:81.5px;top:234.5px" width="13.5" height="13.5" viewBox="0 0 16 16"><path d="M2 1h7l3 3v10.500h-10z" fill="#fff" stroke="#777" stroke-width="1"/><path d="M9 1v3h3" fill="#eee" stroke="#777" stroke-width=".8"/><path d="M4 6h5M4 8.500h4" stroke="#888" stroke-width="1"/><path d="M9.96 7.6h3.08v2.86h2.86v3.08h-2.86v2.86h-3.08v-2.86h-2.86v-3.08h2.86z" fill="#1db31d" stroke="#0c8a0c" stroke-width=".5"/></svg>
<svg class="i" style="left:81.5px;top:251px" width="13.5" height="13.5" viewBox="0 0 16 16"><path d="M2 1h7l3 3v10.500h-10z" fill="#fff" stroke="#777" stroke-width="1"/><path d="M9 1v3h3" fill="#eee" stroke="#777" stroke-width=".8"/><path d="M4 6h5M4 8.500h4" stroke="#888" stroke-width="1"/><circle cx="12" cy="12" r="3.600" fill="#25b425" stroke="#0e7a0e" stroke-width=".6"/><path d="M10.200 12l1.300 1.500 2.300-2.800" stroke="#fff" stroke-width="1.100" fill="none"/></svg>
<svg class="i" style="left:81.5px;top:268px" width="13.5" height="13.5" viewBox="0 0 16 16"><path d="M2 1h7l3 3v10.500h-10z" fill="#fff" stroke="#777" stroke-width="1"/><path d="M9 1v3h3" fill="#eee" stroke="#777" stroke-width=".8"/><path d="M4 6h5M4 8.500h4" stroke="#888" stroke-width="1"/><circle cx="12" cy="12" r="3.600" fill="#f0c030" stroke="#a8800c" stroke-width=".7"/><circle cx="12" cy="12" r="1.300" fill="#fff8d8"/></svg>
<div class="r" style="left:92.2px;top:256.3px;width:120.5px;height:29px;border:5px solid #f0844a;box-sizing:border-box;"></div>
<div class="r" style="left:228.2px;top:253.5px;width:32px;height:32px;border-radius:50%;background:#f0844a;color:#fff;font-weight:bold;font-size:18px;line-height:32.5px;text-align:center;">3</div>
<div class="r" style="left:9.7px;top:414.2px;width:64px;height:29px;border:4.5px solid #f0844a;box-sizing:border-box;"></div>
<div class="r" style="left:66.2px;top:444px;width:25.2px;height:25.2px;border-radius:50%;background:#f0844a;color:#fff;font-weight:bold;font-size:19.5px;line-height:25.7px;text-align:center;">2</div>
<div class="r" style="left:6.5px;top:507.9px;width:49.5px;height:22.1px;border:4.5px solid #f0844a;box-sizing:border-box;"></div>
<div class="r" style="left:19.4px;top:482.2px;width:25.2px;height:25.2px;border-radius:50%;background:#f0844a;color:#fff;font-weight:bold;font-size:19.5px;line-height:25.7px;text-align:center;">1</div>
</body></html>
